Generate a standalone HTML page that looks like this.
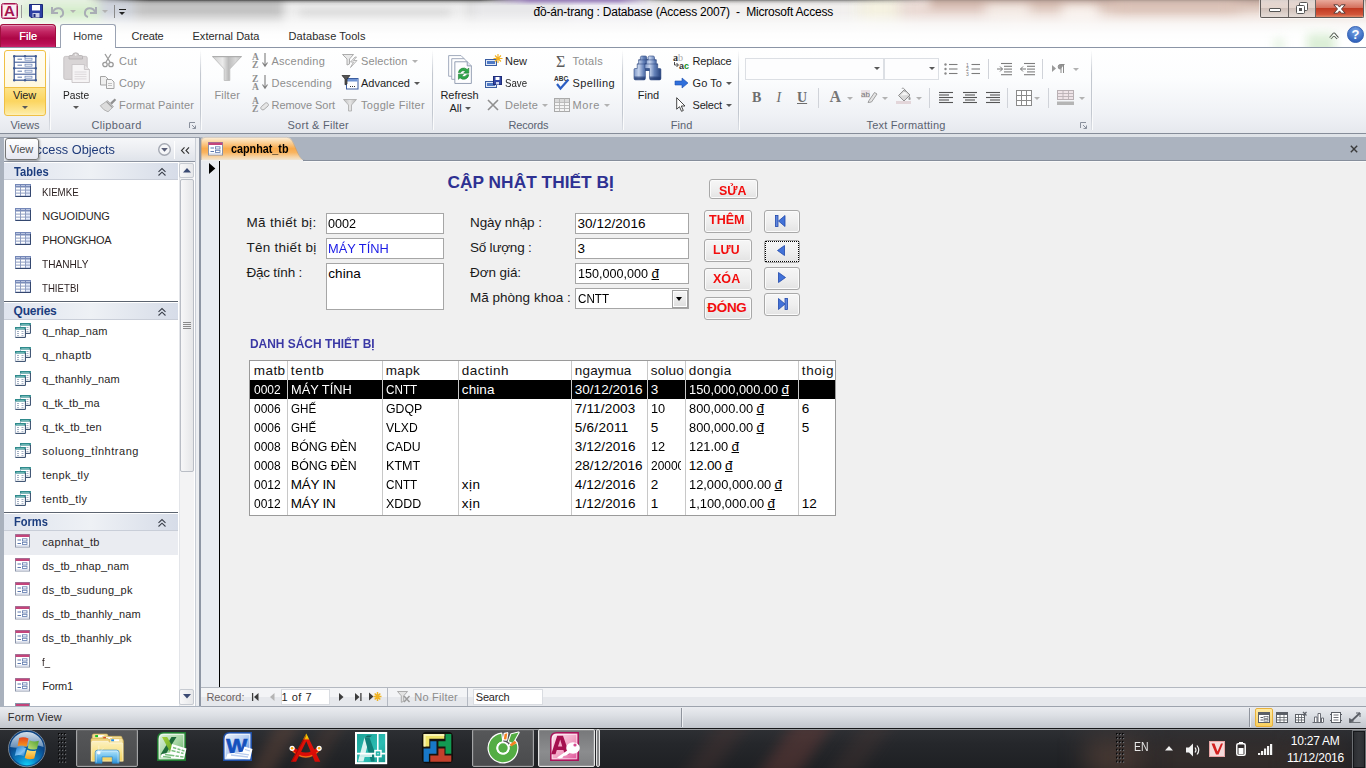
<!DOCTYPE html>
<html><head><meta charset="utf-8"><title>Microsoft Access</title>
<style>
*{box-sizing:border-box;margin:0;padding:0}
html,body{width:1366px;height:768px;overflow:hidden;background:#abb3bf}
body{font-family:"Liberation Sans",sans-serif;font-size:12px;color:#1e1e1e;position:relative}
.a{position:absolute}
.t{position:absolute;white-space:nowrap;line-height:14px}
svg{position:absolute;overflow:visible}
.d{color:#8e8e8e}
#title{left:0;top:0;width:1366px;height:48px;overflow:hidden;background:#dcdcdc}
#title2{left:0;top:12px;width:1366px;height:36px;background:linear-gradient(to bottom,rgba(255,255,255,0),rgba(255,255,255,.75) 12px,rgba(255,255,255,.97) 22px,#fff 30px)}
#ribbon{left:0;top:47px;width:1366px;height:87px;background:linear-gradient(to bottom,#ffffff 0,#fcfdfe 30px,#eff1f5 68px,#e5e8ed 86px);border-top:1px solid #8b95a6;border-bottom:1px solid #868d99}
.vsep{position:absolute;top:50px;width:2px;height:80px;background:linear-gradient(to bottom,rgba(190,195,203,0),#c3c8d0 30%,#c3c8d0 80%,rgba(190,195,203,.3));border-right:1px solid rgba(255,255,255,.9)}
.sep2{position:absolute;width:1px;height:20px;background:#d0d3d9}
.arr{position:absolute;width:0;height:0;border-left:3px solid transparent;border-right:3px solid transparent;border-top:3px solid #585858}
.arr.d{border-top-color:#b2b2b2}
.navhdr{position:absolute;left:4px;width:174px;height:17px;background:linear-gradient(to right,#dfe4ee 0,#eef1f5 50%,#d6dce8 100%);border-bottom:1px solid #c9ced8}
.ni{position:absolute;left:42.5px;font-size:11px;line-height:14px;white-space:nowrap;color:#2a1d1d}
.inp{position:absolute;background:#fff;border:1px solid #a6a6a6}
.btn{position:absolute;border-radius:3px;border:1px solid #a8a8a8;background:linear-gradient(to bottom,#f6f6f6 0,#efefef 50%,#e3e3e3 100%);box-shadow:inset 0 0 0 1px #fbfbfb}
.cl{position:absolute;top:361px;width:1px;height:154px;background:#c8c8c8}
</style></head><body>
<!-- part_chrome -->
<div class="a" id="title"><div class="a" style="left:-20px;top:-10px;width:125px;height:60px;background:#f3f5f1;filter:blur(7px)"></div><div class="a" style="left:20px;top:4px;width:92px;height:36px;background:#cdeac2;filter:blur(9px)"></div><div class="a" style="left:100px;top:-10px;width:38px;height:36px;background:#d0d4dd;filter:blur(5px)"></div><div class="a" style="left:135px;top:-10px;width:150px;height:34px;background:#c3c3c3;filter:blur(6px)"></div><div class="a" style="left:285px;top:-10px;width:183px;height:36px;background:#ededed;filter:blur(5px)"></div><div class="a" style="left:300px;top:10px;width:150px;height:8px;background:#d6d6d6;filter:blur(4px)"></div><div class="a" style="left:472px;top:-10px;width:94px;height:34px;background:#e8e8ea;filter:blur(6px)"></div><div class="a" style="left:566px;top:-10px;width:94px;height:34px;background:#f0eef4;filter:blur(7px)"></div><div class="a" style="left:655px;top:-10px;width:215px;height:36px;background:#f2f0ef;filter:blur(8px)"></div><div class="a" style="left:858px;top:-10px;width:50px;height:36px;background:#f5f2e1;filter:blur(8px)"></div><div class="a" style="left:900px;top:-10px;width:110px;height:36px;background:#ebdbd5;filter:blur(8px)"></div><div class="a" style="left:1005px;top:-10px;width:395px;height:40px;background:#eddfd8;filter:blur(8px)"></div><div class="a" style="left:930px;top:-8px;width:470px;height:16px;background:#cfb3a7;filter:blur(5px)"></div><div class="a" style="left:1110px;top:-6px;width:130px;height:20px;background:#dbc2b7;filter:blur(9px)"></div><div class="a" style="left:985px;top:5px;width:45px;height:15px;background:#f6efea;filter:blur(6px)"></div><div class="a" style="left:1062px;top:6px;width:36px;height:14px;background:#fbf6f2;filter:blur(6px)"></div><div class="a" style="left:1285px;top:28px;width:50px;height:18px;background:#e3f0dc;filter:blur(7px)"></div><div class="a" style="left:0;top:0;width:1366px;height:7px;background:linear-gradient(to bottom,rgba(40,40,40,.78) 0,rgba(70,70,70,.42) 1.500px,rgba(110,110,110,.14) 3.500px,rgba(150,150,150,0) 6px);-webkit-mask-image:linear-gradient(to right,transparent 85px,#000 150px,#000 480px,rgba(0,0,0,.25) 520px,rgba(0,0,0,.25) 640px,rgba(0,0,0,.8) 680px,rgba(0,0,0,.7) 850px,rgba(0,0,0,.3) 930px,rgba(0,0,0,.3) 1366px);mask-image:linear-gradient(to right,transparent 85px,#000 150px,#000 480px,rgba(0,0,0,.25) 520px,rgba(0,0,0,.25) 640px,rgba(0,0,0,.8) 680px,rgba(0,0,0,.7) 850px,rgba(0,0,0,.3) 930px,rgba(0,0,0,.3) 1366px)"></div><div class="a" style="left:490px;top:-2px;width:160px;height:7px;background:linear-gradient(to bottom,rgba(125,90,170,.95),rgba(140,105,185,.6) 50%,rgba(150,120,190,0));filter:blur(1.500px);-webkit-mask-image:linear-gradient(to right,transparent,#000 25%,#000 80%,transparent);mask-image:linear-gradient(to right,transparent,#000 25%,#000 80%,transparent)"></div></div><div class="a" id="title2"></div><svg style="left:1px;top:3px" width="17" height="16" viewBox="0 0 17 16"><rect x=".5" y=".5" width="16" height="15" rx="2" fill="#fbeef3" stroke="#a3154f"/><rect x="1.5" y="1.5" width="14" height="13" rx="1" fill="none" stroke="#d77a9f" stroke-width="1"/><text x="8.5" y="13.3" font-family="Liberation Sans,sans-serif" font-weight="bold" font-size="15" text-anchor="middle" fill="#a3154f">A</text></svg><div class="a" style="left:21px;top:5px;width:1px;height:13px;background:#9a9a9a"></div><svg style="left:29px;top:4px" width="14" height="14" viewBox="0 0 14 14"><path d="M.5 .5h13v13h-11.5l-1.5-1.5z" fill="#2b3fa3" stroke="#1c2a78"/><rect x="3" y="1" width="8" height="5.5" fill="#fff"/><rect x="3.5" y="9" width="7" height="4.5" fill="#c9cfe8"/><rect x="4.5" y="10" width="2" height="3" fill="#1c2a78"/></svg><svg style="left:51px;top:5px" width="14" height="12" viewBox="0 0 14 12"><path d="M1 2v6h6" fill="none" stroke="#a9adb5" stroke-width="2"/><path d="M2 7c2-5 9-5 10 0c.5 3-1 4.5-3 5" fill="none" stroke="#a9adb5" stroke-width="2"/></svg><div class="arr d" style="left:69.5px;top:10px"></div><svg style="left:83px;top:5px" width="14" height="12" viewBox="0 0 14 12"><path d="M13 2v6h-6" fill="none" stroke="#a9adb5" stroke-width="2"/><path d="M12 7c-2-5-9-5-10 0c-.5 3 1 4.5 3 5" fill="none" stroke="#a9adb5" stroke-width="2"/></svg><div class="arr d" style="left:101.5px;top:10px"></div><div class="a" style="left:114px;top:5px;width:1px;height:13px;background:#8a8a8a"></div><div class="a" style="left:119px;top:8.5px;width:7px;height:1.5px;background:#222"></div><div class="arr" style="left:119px;top:11.5px;border-left-width:3.5px;border-right-width:3.5px;border-top:3.5px solid #222"></div><div class="t" style="letter-spacing:-0.198px;left:533.50px;top:5.20px;font-size:12px;line-height:14px;color:#000;white-space:pre;">đồ-án-trang : Database (Access 2007)  -  Microsoft Access</div><div class="a" style="left:1260px;top:0;width:104px;height:18px;border:1px solid #5f5a58;border-top:none;border-radius:0 0 2px 2px;background:linear-gradient(to bottom,rgba(255,255,255,.55) 0,rgba(235,225,220,.5) 45%,rgba(190,180,175,.45) 50%,rgba(215,205,200,.5) 100%);box-shadow:0 0 0 1px rgba(255,255,255,.5)"></div><div class="a" style="left:1316px;top:0;width:47px;height:17px;border-radius:0 0 1px 0;background:linear-gradient(to bottom,#e9a99b 0,#d4705d 45%,#c13a22 50%,#d2553a 85%,#e08a6a 100%)"></div><div class="a" style="left:1288px;top:0;width:1px;height:17px;background:#6b6563"></div><div class="a" style="left:1315px;top:0;width:1px;height:17px;background:#6b6563"></div><div class="a" style="left:1269px;top:8px;width:12px;height:4px;background:#fff;border:1px solid #555;border-radius:1px"></div><svg style="left:1296px;top:2px" width="12" height="12" viewBox="0 0 12 12"><rect x="3.5" y=".5" width="8" height="8" rx="1" fill="#fff" stroke="#555"/><rect x=".5" y="3.5" width="8" height="8" rx="1" fill="#fff" stroke="#555"/><rect x="3" y="6" width="3" height="3" fill="#555"/></svg><svg style="left:1332.5px;top:3.5px" width="13" height="10" viewBox="0 0 13 10"><path d="M.8 .8h3.900l1.800 2.300l1.800-2.300h3.900l-3.700 4.200l3.700 4.200h-3.900l-1.800-2.300l-1.800 2.300h-3.900l3.700-4.200z" fill="#fff" stroke="#5a3a36" stroke-width="1"/></svg><svg style="left:1347px;top:26.3px" width="17" height="17" viewBox="0 0 17 17"><defs><radialGradient id="hg" cx=".5" cy=".3" r=".7"><stop offset="0" stop-color="#7aa6e6"/><stop offset="1" stop-color="#2a5cb8"/></radialGradient></defs><circle cx="8.5" cy="8.5" r="8" fill="url(#hg)" stroke="#3b66b5"/><text x="8.5" y="13" font-family="Liberation Sans,sans-serif" font-weight="bold" font-size="13" text-anchor="middle" fill="#fff">?</text></svg><svg style="left:1328.8px;top:31.8px" width="10" height="8" viewBox="0 0 10 8"><path d="M1.300 6.300l3.700-4.300l3.700 4.300" fill="none" stroke="#2a2a2a" stroke-width="3" stroke-linejoin="round"/><path d="M1.300 6.300l3.700-4.300l3.700 4.300" fill="none" stroke="#fff" stroke-width="1.300" stroke-linejoin="round"/></svg><div class="a" style="left:1255px;top:26px;width:100px;height:21px;overflow:hidden"><div class="a" style="left:52px;top:8px;width:28px;height:22px;background:rgba(196,228,188,.6);filter:blur(5px)"></div><div class="a" style="left:18px;top:12px;width:12px;height:14px;background:rgba(206,232,198,.4);filter:blur(4px)"></div></div><div class="a" id="ribbon"></div><div class="a" style="left:0;top:24px;width:56px;height:23px;border-radius:3px 4px 0 0;border:1px solid #a0103f;border-bottom:none;background:linear-gradient(to bottom,#d75b8e 0,#c22562 30%,#ad0646 60%,#b90f54 85%,#c9236a 100%);box-shadow:inset 0 1px 0 rgba(255,255,255,.35)"></div><div class="t" style="letter-spacing:-0.007px;left:19.30px;top:29.00px;font-size:11px;line-height:14px;color:#fff;text-shadow:0 0 .6px #fff;">File</div><div class="a" style="left:60px;top:24px;width:56px;height:24px;border-radius:3px 3px 0 0;border:1px solid #9aa3b3;border-bottom:none;background:#fff"></div><div class="t" style="letter-spacing:-0.011px;left:73.20px;top:29.00px;font-size:11px;line-height:14px;color:#3b3b3b;">Home</div><div class="t" style="letter-spacing:-0.170px;left:131.50px;top:29.00px;font-size:11px;line-height:14px;color:#2b2b2b;">Create</div><div class="t" style="letter-spacing:0.027px;left:192.50px;top:29.00px;font-size:11px;line-height:14px;color:#2b2b2b;">External Data</div><div class="t" style="letter-spacing:0.098px;left:288.50px;top:29.00px;font-size:11px;line-height:14px;color:#2b2b2b;">Database Tools</div>
<!-- part_ribbon -->
<div class="a" style="left:4px;top:50px;width:42px;height:66px;border:1px solid #f0c045;border-radius:3px;background:linear-gradient(to bottom,#fffdf6 0,#fff8df 36px,#fde38a 37px,#fbd560 50px,#fdeaa0 62px,#fff6d5 66px)"></div><div class="a" style="left:5px;top:87px;width:40px;height:1px;background:#f0c045"></div><svg style="left:12.6px;top:55px" width="24" height="26.4" viewBox="0 0 24 26.4"><rect x="1.2" y="1.2" width="21.6" height="24" fill="#fff" stroke="#3e5a94" stroke-width="1.3"/><path d="M1 7.2 h22" stroke="#3e5a94" stroke-width="1.1"/><path d="M1 13.2 h22" stroke="#3e5a94" stroke-width="1.1"/><path d="M1 19.2 h22" stroke="#3e5a94" stroke-width="1.1"/><path d="M4.5 4.2 h4.5" stroke="#5f79ad" stroke-width="1"/><rect x="12" y="3.2" width="7" height="2" fill="#f4f6fb" stroke="#6a83b5" stroke-width=".7"/><path d="M4.5 10.2 h4.5" stroke="#5f79ad" stroke-width="1"/><rect x="12" y="9.2" width="7" height="2" fill="#f4f6fb" stroke="#6a83b5" stroke-width=".7"/><path d="M4.5 16.2 h4.5" stroke="#5f79ad" stroke-width="1"/><rect x="12" y="15.2" width="7" height="2" fill="#f4f6fb" stroke="#6a83b5" stroke-width=".7"/><path d="M4.5 22.2 h4.5" stroke="#5f79ad" stroke-width="1"/><rect x="12" y="21.2" width="7" height="2" fill="#f4f6fb" stroke="#6a83b5" stroke-width=".7"/><circle cx="1.2" cy="1.2" r="1.2" fill="#3e5a94"/><circle cx="22.8" cy="1.2" r="1.2" fill="#3e5a94"/><circle cx="1.2" cy="25.2" r="1.2" fill="#3e5a94"/><circle cx="22.8" cy="25.2" r="1.2" fill="#3e5a94"/><circle cx="12" cy="1.2" r="1.2" fill="#3e5a94"/><circle cx="12" cy="25.2" r="1.2" fill="#3e5a94"/><circle cx="1.2" cy="13.2" r="1.2" fill="#3e5a94"/><circle cx="22.8" cy="13.2" r="1.2" fill="#3e5a94"/></svg><div class="t" style="letter-spacing:-0.086px;left:12.90px;top:88.00px;font-size:11px;line-height:14px;color:#1e1e1e;">View</div><div class="arr" style="left:21.5px;top:105.5px"></div><div class="t" style="letter-spacing:-0.029px;left:10.50px;top:118.00px;font-size:11px;line-height:14px;color:#5a6270;">Views</div><div class="vsep" style="left:49px"></div><svg style="left:62.5px;top:52px" width="27" height="32" viewBox="0 0 27 32"><rect x=".8" y="4.400" width="23.400" height="23" rx="1.500" fill="#d9d5d6" stroke="#c4c0c1" stroke-width=".9"/><path d="M6 7V4.500q0-1 1-1h2.500q0-2.700 3.200-2.700t3.200 2.700H18.500q1 0 1 1V7z" fill="#cfcbcc" stroke="#b3afb0" stroke-width=".8"/><circle cx="12.700" cy="2.800" r="1" fill="#f0eeee"/><path d="M9 12.500h12.400l5 5v13h-17.400z" fill="#f6f4f5" stroke="#c8c4c6" stroke-width=".9"/><path d="M21.400 12.500v5h5" fill="#e6e3e4" stroke="#c8c4c6" stroke-width=".9"/><path d="M11.500 20h12" stroke="#d6d2d4" stroke-width=".8"/><path d="M11.500 22.3h12" stroke="#d6d2d4" stroke-width=".8"/><path d="M11.500 24.6h12" stroke="#d6d2d4" stroke-width=".8"/><path d="M11.500 26.9h12" stroke="#d6d2d4" stroke-width=".8"/></svg><div class="t" style="transform:scaleX(0.9278);transform-origin:0 50%;left:62.50px;top:88.00px;font-size:11px;line-height:14px;color:#1e1e1e;">Paste</div><div class="arr" style="left:72.5px;top:105.5px"></div><svg style="left:102px;top:54px" width="12" height="14" viewBox="0 0 12 14"><path d="M3 0l5 8M9 0L4 8" stroke="#9b9b9b" stroke-width="1.3" fill="none"/><circle cx="3" cy="10.5" r="2.2" fill="none" stroke="#9b9b9b" stroke-width="1.3"/><circle cx="9" cy="10.5" r="2.2" fill="none" stroke="#9b9b9b" stroke-width="1.3"/></svg><div class="t" style="letter-spacing:0.294px;left:119.00px;top:54.00px;font-size:11px;line-height:14px;color:#8e8e8e;">Cut</div><svg style="left:100px;top:76px" width="15" height="13" viewBox="0 0 15 13"><path d="M.5 .5h5l2.5 2.5v6h-7.5z" fill="#efefef" stroke="#a4a4a4"/><path d="M6.5 3.5h5l2.5 2.5v6.5h-7.5z" fill="#f6f6f6" stroke="#a4a4a4"/><path d="M8 7.5h4M8 9.5h4" stroke="#b5b5b5" stroke-width=".8"/></svg><div class="t" style="letter-spacing:0.080px;left:119.00px;top:76.00px;font-size:11px;line-height:14px;color:#8e8e8e;">Copy</div><svg style="left:100px;top:98px" width="16" height="14" viewBox="0 0 16 14"><path d="M10.200 4.800l4.500-4.300l1.500 1.500l-4.300 4.500z" fill="#8f8f8f"/><path d="M.3 7.700L7.500 2.600l6 6L8 13.800Q3.500 12.500.3 7.700Z" fill="#dcdcdc" stroke="#adadad" stroke-width=".9"/><path d="M6.500 3.500l6 6" stroke="#9f9f9f" stroke-width="1.300"/></svg><div class="t" style="letter-spacing:0.161px;left:119.00px;top:98.00px;font-size:11px;line-height:14px;color:#8e8e8e;">Format Painter</div><div class="t" style="letter-spacing:0.346px;left:91.50px;top:118.00px;font-size:11px;line-height:14px;color:#5a6270;">Clipboard</div><svg style="left:189px;top:122px" width="7" height="7" viewBox="0 0 7 7"><path d="M.5 6V.5H6" fill="none" stroke="#8a909c"/><path d="M3 3l3.5 3.5M6.5 3.5v3h-3" fill="none" stroke="#8a909c"/></svg><div class="vsep" style="left:200px"></div><svg style="left:212px;top:56px" width="30" height="25" viewBox="0 0 30 25"><defs><linearGradient id="fg" x1="0" x2="1"><stop offset="0" stop-color="#cfcfcf"/><stop offset=".35" stop-color="#ebebeb"/><stop offset=".55" stop-color="#bcbcbc"/><stop offset=".8" stop-color="#d9d9d9"/><stop offset="1" stop-color="#c2c2c2"/></linearGradient></defs><path d="M.5 .5H29.500L17.800 13V24.500H12.200V13Z" fill="url(#fg)" stroke="#b9b9b9" stroke-width=".8"/><path d="M.5 .7H29.500" stroke="#a9a9a9" stroke-width="1"/></svg><div class="t" style="letter-spacing:0.209px;left:214.40px;top:88.00px;font-size:11px;line-height:14px;color:#8e8e8e;">Filter</div><svg style="left:252.2px;top:53.5px" width="16" height="16" viewBox="0 0 16 16"><text x="0" y="6" font-family="Liberation Serif,serif" font-size="9.500" font-weight="bold" fill="#8f8f8f">A</text><text x="0" y="14.200" font-family="Liberation Serif,serif" font-size="9.500" font-weight="bold" fill="#8f8f8f">Z</text></svg><svg style="left:261.7px;top:53px" width="6" height="14" viewBox="0 0 6 14"><path d="M3 0v13M.5 9.500l2.500 3.800l2.500-3.800" fill="none" stroke="#7d7d7d" stroke-width="1.100"/></svg><div class="t" style="letter-spacing:0.236px;left:271.50px;top:54.00px;font-size:11px;line-height:14px;color:#8e8e8e;">Ascending</div><svg style="left:252.2px;top:75.5px" width="16" height="16" viewBox="0 0 16 16"><text x="0" y="6" font-family="Liberation Serif,serif" font-size="9.500" font-weight="bold" fill="#8f8f8f">Z</text><text x="0" y="14.200" font-family="Liberation Serif,serif" font-size="9.500" font-weight="bold" fill="#8f8f8f">A</text></svg><svg style="left:261.7px;top:75px" width="6" height="14" viewBox="0 0 6 14"><path d="M3 0v13M.5 9.500l2.500 3.800l2.500-3.800" fill="none" stroke="#7d7d7d" stroke-width="1.100"/></svg><div class="t" style="letter-spacing:0.240px;left:271.50px;top:76.00px;font-size:11px;line-height:14px;color:#8e8e8e;">Descending</div><svg style="left:252.2px;top:97.5px" width="16" height="16" viewBox="0 0 16 16"><text x="0" y="6" font-family="Liberation Serif,serif" font-size="9.500" font-weight="bold" fill="#8f8f8f">A</text><text x="0" y="14.200" font-family="Liberation Serif,serif" font-size="9.500" font-weight="bold" fill="#8f8f8f">Z</text></svg><svg style="left:258px;top:102px" width="11" height="10" viewBox="0 0 11 10"><path d="M3.5 4.5l4-3.5c1.500-1 4 1.500 2.500 3l-4 3.500c-2 1.500-4.500-1.500-2.500-3z" fill="#e6e6e6" stroke="#a2a2a2" stroke-width=".9"/></svg><div class="t" style="letter-spacing:-0.063px;left:271.50px;top:98.00px;font-size:11px;line-height:14px;color:#8e8e8e;">Remove Sort</div><svg style="left:342px;top:54px" width="16" height="15" viewBox="0 0 16 15"><path d="M.5 .5h11l-4 4.500v5l-2.500 1v-6z" fill="#e9e9e9" stroke="#a5a5a5" stroke-width=".9"/><path d="M13 3l-4.500 5h3l-3 5.500l6.500-7h-3.500l3-3.500z" fill="#f2f2f2" stroke="#a5a5a5" stroke-width=".8"/></svg><div class="t" style="letter-spacing:0.138px;left:361.00px;top:54.00px;font-size:11px;line-height:14px;color:#8e8e8e;">Selection</div><div class="arr d" style="left:412px;top:60px"></div><svg style="left:342px;top:75px" width="17" height="15" viewBox="0 0 17 15"><rect x="4.500" y="3.500" width="11.500" height="10.500" fill="#fff" stroke="#3a5da0"/><rect x="5" y="4" width="10.500" height="2.500" fill="#6f93d3"/><path d="M8 11.500h1M10 11.500h1M12 11.500h1" stroke="#333" stroke-width="1"/><path d="M0 .5h8l-3 3.500v5l-2 .8v-5.800z" fill="#555" stroke="#222" stroke-width=".7"/></svg><div class="t" style="letter-spacing:0.009px;left:361.00px;top:76.00px;font-size:11px;line-height:14px;color:#1e1e1e;">Advanced</div><div class="arr" style="left:414px;top:82px"></div><svg style="left:343px;top:99px" width="14" height="13" viewBox="0 0 14 13"><defs><linearGradient id="fg2" x1="0" x2="1"><stop offset="0" stop-color="#bdbdbd"/><stop offset=".5" stop-color="#e6e6e6"/><stop offset="1" stop-color="#b5b5b5"/></linearGradient></defs><path d="M.5 .5h13l-5 5.500v6h-3v-6z" fill="url(#fg2)" stroke="#a9a9a9" stroke-width=".8"/></svg><div class="t" style="letter-spacing:0.314px;left:361.00px;top:98.00px;font-size:11px;line-height:14px;color:#8e8e8e;">Toggle Filter</div><div class="t" style="letter-spacing:0.264px;left:287.50px;top:118.00px;font-size:11px;line-height:14px;color:#5a6270;">Sort &amp; Filter</div><div class="vsep" style="left:432px"></div>
<!-- part_ribbon2 -->
<svg style="left:446.5px;top:53px" width="26" height="32" viewBox="0 0 25 31"><path d="M1.5 2.5h12l3 3v17h-15z" fill="#fff" stroke="#9aa4b8" stroke-width=".9"/><path d="M4.500 5.500h12l3 3v17h-15z" fill="#fff" stroke="#9aa4b8" stroke-width=".9"/><path d="M7.500 8.500h12l4 4v17h-16z" fill="#fdfdfe" stroke="#8e99af" stroke-width=".9"/><path d="M19.500 8.500v4h4" fill="#dfe4ee" stroke="#8e99af" stroke-width=".9"/><path d="M11 19a5 5 0 0 1 8.500-3l1.500-1.500v5h-5l1.700-1.700a3 3 0 0 0-4.700 1.200z" fill="#2fa84a" stroke="#1d7e33" stroke-width=".6"/><path d="M21 21a5 5 0 0 1-8.500 3l-1.500 1.500v-5h5l-1.700 1.700a3 3 0 0 0 4.700-1.200z" fill="#2fa84a" stroke="#1d7e33" stroke-width=".6"/></svg><div class="t" style="letter-spacing:-0.074px;left:440.50px;top:88.00px;font-size:11px;line-height:14px;color:#1e1e1e;">Refresh</div><div class="t" style="letter-spacing:-0.009px;left:449.40px;top:100.50px;font-size:11px;line-height:14px;color:#1e1e1e;">All</div><div class="arr" style="left:464.5px;top:106.5px"></div><svg style="left:485px;top:54px" width="17" height="13" viewBox="0 0 17 13"><rect x=".5" y="5.500" width="11" height="6" fill="#dfe8f7" stroke="#3a5da0"/><rect x="2" y="7" width="8" height="3" fill="#4f79c4"/><path d="M13 0v9M8.500 4.500h9M10 1.500l6 6M16 1.500l-6 6" stroke="#f2b021" stroke-width="1.100"/></svg><div class="t" style="letter-spacing:-0.002px;left:505.00px;top:54.00px;font-size:11px;line-height:14px;color:#1e1e1e;">New</div><svg style="left:485px;top:76px" width="17" height="13" viewBox="0 0 17 13"><rect x=".5" y="5.500" width="11" height="6" fill="#dfe8f7" stroke="#3a5da0"/><rect x="2" y="7" width="8" height="3" fill="#4f79c4"/><rect x="8.500" y=".5" width="8" height="8" fill="#3347a5" stroke="#1f2d78"/><rect x="10.500" y="1" width="4" height="3" fill="#fff"/><rect x="11" y="6" width="3" height="2.500" fill="#cfd5ee"/></svg><div class="t" style="transform:scaleX(0.8774);transform-origin:0 50%;left:505.00px;top:76.00px;font-size:11px;line-height:14px;color:#1e1e1e;">Save</div><svg style="left:487px;top:99px" width="12" height="12" viewBox="0 0 12 12"><path d="M1 1l10 10M11 1L1 11" stroke="#8f8f8f" stroke-width="1.600"/></svg><div class="t" style="letter-spacing:0.200px;left:505.00px;top:98.00px;font-size:11px;line-height:14px;color:#8e8e8e;">Delete</div><div class="arr d" style="left:541.5px;top:104px"></div><div class="t" style="left:556.00px;top:52.50px;font-size:16px;line-height:18px;color:#5a5a5a;font-family:Liberation Serif,serif;">Σ</div><div class="t" style="letter-spacing:0.294px;left:572.50px;top:54.00px;font-size:11px;line-height:14px;color:#8e8e8e;">Totals</div><svg style="left:554px;top:74px" width="17" height="17" viewBox="0 0 17 17"><text x="0" y="6.500" font-family="Liberation Sans,sans-serif" font-size="6.500" font-weight="bold" fill="#333">ABC</text><path d="M3 10l3.500 4.500l8-9" fill="none" stroke="#2d5fc4" stroke-width="2.200"/></svg><div class="t" style="letter-spacing:0.420px;left:572.50px;top:76.00px;font-size:11px;line-height:14px;color:#1e1e1e;">Spelling</div><svg style="left:554px;top:98px" width="16" height="14" viewBox="0 0 16 14"><rect x=".5" y=".5" width="15" height="13" fill="#f4f4f4" stroke="#a9a9a9"/><rect x="1" y="1" width="14" height="3" fill="#d9d9d9"/><path d="M.5 4.5h15" stroke="#b5b5b5" stroke-width=".9"/><path d="M.5 7.5h15" stroke="#b5b5b5" stroke-width=".9"/><path d="M.5 10.5h15" stroke="#b5b5b5" stroke-width=".9"/><path d="M5.5 .5v13" stroke="#b5b5b5" stroke-width=".9"/><path d="M10.5 .5v13" stroke="#b5b5b5" stroke-width=".9"/></svg><div class="t" style="letter-spacing:0.609px;left:572.50px;top:98.00px;font-size:11px;line-height:14px;color:#8e8e8e;">More</div><div class="arr d" style="left:604px;top:104px"></div><div class="t" style="letter-spacing:-0.166px;left:508.50px;top:118.00px;font-size:11px;line-height:14px;color:#5a6270;">Records</div><div class="vsep" style="left:621.5px"></div><svg style="left:634.2px;top:56px" width="27" height="24" viewBox="0 0 27 24"><defs><linearGradient id="bg1" x1="0" x2="1"><stop offset="0" stop-color="#7f99c9"/><stop offset=".3" stop-color="#c4d2ec"/><stop offset=".6" stop-color="#6481b8"/><stop offset="1" stop-color="#27427c"/></linearGradient><linearGradient id="bg2" x1="1" x2="0"><stop offset="0" stop-color="#7f99c9"/><stop offset=".3" stop-color="#c4d2ec"/><stop offset=".6" stop-color="#6481b8"/><stop offset="1" stop-color="#27427c"/></linearGradient></defs><rect x="10" y="8.500" width="7" height="6.500" fill="#3b588f"/><g><path d="M6.400 1.500q0-1.500 1.500-1.500h3.400q1.500 0 1.500 1.500V3.800h1.800V7.900h1.400V12.500H11.400V22.400q0 1.500-1.500 1.500H1.500q-1.500 0-1.500-1.500V13.500q0-1 1-1H3.200V7.900H4.600V3.800H6.400Z" fill="url(#bg1)" stroke="#2b4680" stroke-width=".6"/><path d="M4.600 3.900H14.600M3.200 8H16M0 20.800H11.400" stroke="#2b4680" stroke-width=".7" opacity=".75"/><path d="M.3 21.200h10.800v1.500q0 1-1 1H1.300q-1 0-1-1z" fill="#1f3870" opacity=".8"/></g><g transform="translate(26.900 0) scale(-1 1)"><path d="M6.400 1.500q0-1.500 1.500-1.500h3.400q1.500 0 1.500 1.500V3.800h1.800V7.900h1.400V12.500H11.400V22.400q0 1.500-1.500 1.500H1.500q-1.500 0-1.500-1.500V13.500q0-1 1-1H3.200V7.900H4.600V3.800H6.400Z" fill="url(#bg2)" stroke="#2b4680" stroke-width=".6"/><path d="M4.600 3.900H14.600M3.200 8H16M0 20.800H11.400" stroke="#2b4680" stroke-width=".7" opacity=".75"/><path d="M.3 21.200h10.800v1.500q0 1-1 1H1.300q-1 0-1-1z" fill="#1f3870" opacity=".8"/></g></svg><div class="t" style="letter-spacing:-0.025px;left:637.80px;top:88.00px;font-size:11px;line-height:14px;color:#1e1e1e;">Find</div><svg style="left:673px;top:53px" width="17" height="16" viewBox="0 0 17 16"><text x="0" y="7.500" font-family="Liberation Serif,serif" font-size="10" font-weight="bold" fill="#333">a</text><text x="5" y="7.500" font-family="Liberation Serif,serif" font-size="10" fill="#aaa">b</text><text x="6" y="15.500" font-family="Liberation Sans,sans-serif" font-size="9" font-weight="bold" fill="#333">a</text><text x="11" y="15.500" font-family="Liberation Sans,sans-serif" font-size="9" font-weight="bold" fill="#14901f">c</text><path d="M1.500 9v3h3.500M3.500 10l2 2l-2 2" fill="none" stroke="#333" stroke-width=".9"/></svg><div class="t" style="letter-spacing:-0.194px;left:692.50px;top:54.00px;font-size:11px;line-height:14px;color:#1e1e1e;">Replace</div><svg style="left:675px;top:78px" width="13" height="10" viewBox="0 0 13 10"><path d="M0 3h7v-3l6 5l-6 5v-3h-7z" fill="#2f6fdb" stroke="#1c4fae" stroke-width=".6"/></svg><div class="t" style="letter-spacing:0.070px;left:692.50px;top:76.00px;font-size:11px;line-height:14px;color:#1e1e1e;">Go To</div><div class="arr" style="left:725.5px;top:82px"></div><svg style="left:676px;top:97px" width="10" height="15" viewBox="0 0 10 15"><path d="M.7.700v11.500l2.800-2.500l2 4.600l1.800-.8l-2-4.500h3.700z" fill="#fff" stroke="#333" stroke-width=".9"/></svg><div class="t" style="letter-spacing:-0.179px;left:692.50px;top:98.00px;font-size:11px;line-height:14px;color:#1e1e1e;">Select</div><div class="arr" style="left:725.5px;top:104px"></div><div class="t" style="letter-spacing:0.050px;left:670.80px;top:118.00px;font-size:11px;line-height:14px;color:#5a6270;">Find</div><div class="vsep" style="left:738px"></div><div class="a" style="left:745px;top:58px;width:139px;height:22px;border:1px solid #dcdfe4;background:#fdfdfe"></div><div class="a" style="left:884px;top:58px;width:55px;height:22px;border:1px solid #dcdfe4;background:#fdfdfe"></div><div class="arr" style="left:873.5px;top:66.7px"></div><div class="arr" style="left:928.5px;top:66.7px"></div><svg style="left:944px;top:62.5px" width="14" height="12" viewBox="0 0 14 12"><circle cx="1.500" cy="1.5" r="1.200" fill="#8a8a8a"/><path d="M5 1.5h8.500" stroke="#7d7d7d" stroke-width="1.100"/><circle cx="1.500" cy="6" r="1.200" fill="#8a8a8a"/><path d="M5 6h8.500" stroke="#7d7d7d" stroke-width="1.100"/><circle cx="1.500" cy="10.5" r="1.200" fill="#8a8a8a"/><path d="M5 10.5h8.500" stroke="#7d7d7d" stroke-width="1.100"/></svg><svg style="left:965.5px;top:62.5px" width="14" height="12" viewBox="0 0 14 12"><text x="0" y="3.5" font-family="Liberation Sans,sans-serif" font-size="5" fill="#777">1</text><path d="M5.500 1.5h8.500" stroke="#7d7d7d" stroke-width="1.100"/><text x="0" y="8" font-family="Liberation Sans,sans-serif" font-size="5" fill="#777">2</text><path d="M5.500 6h8.500" stroke="#7d7d7d" stroke-width="1.100"/><text x="0" y="12.5" font-family="Liberation Sans,sans-serif" font-size="5" fill="#777">3</text><path d="M5.500 10.5h8.500" stroke="#7d7d7d" stroke-width="1.100"/></svg><div class="sep2" style="left:988px;top:59px"></div><svg style="left:997px;top:62.5px" width="16" height="12" viewBox="0 0 16 12"><path d="M4 0.5h11" stroke="#7d7d7d" stroke-width="1.100"/><path d="M7 3.3h8" stroke="#7d7d7d" stroke-width="1.100"/><path d="M7 6.1h8" stroke="#7d7d7d" stroke-width="1.100"/><path d="M7 8.9h8" stroke="#7d7d7d" stroke-width="1.100"/><path d="M4 11.7h11" stroke="#7d7d7d" stroke-width="1.100"/><path d="M0 6h5.500M3 3.500l2.500 2.500l-2.500 2.500" fill="none" stroke="#777" stroke-width="1"/></svg><svg style="left:1019.5px;top:62.5px" width="16" height="12" viewBox="0 0 16 12"><path d="M4 0.5h11" stroke="#7d7d7d" stroke-width="1.100"/><path d="M7 3.3h8" stroke="#7d7d7d" stroke-width="1.100"/><path d="M7 6.1h8" stroke="#7d7d7d" stroke-width="1.100"/><path d="M7 8.9h8" stroke="#7d7d7d" stroke-width="1.100"/><path d="M4 11.7h11" stroke="#7d7d7d" stroke-width="1.100"/><path d="M6 6h-5.500M3 3.500l-2.500 2.500l2.500 2.500" fill="none" stroke="#777" stroke-width="1"/></svg><div class="sep2" style="left:1042px;top:59px"></div><svg style="left:1052px;top:64px" width="14" height="10" viewBox="0 0 14 10"><path d="M0 1l4 3.500l-4 3.500z" fill="#9a9a9a"/><path d="M9 0v9M11.500 0v9M12.500 .5h-4a2.300 2.300 0 0 0 0 4.600" fill="#9a9a9a" stroke="#8a8a8a" stroke-width="1"/></svg><div class="arr d" style="left:1072.5px;top:67.5px"></div><div class="t" style="left:752.00px;top:90.50px;font-size:14px;line-height:14px;color:#6e6e6e;font-weight:bold;font-family:Liberation Serif,serif;">B</div><div class="t" style="left:776.50px;top:90.50px;font-size:14px;line-height:14px;color:#6e6e6e;font-family:Liberation Serif,serif;font-style:italic;">I</div><div class="t" style="left:797.00px;top:90.50px;font-size:14px;line-height:14px;color:#6e6e6e;font-family:Liberation Serif,serif;text-decoration:underline;font-weight:bold;">U</div><div class="sep2" style="left:818px;top:88px"></div><div class="t" style="left:829.50px;top:90.00px;font-size:16px;line-height:14px;color:#777;font-weight:bold;font-family:Liberation Serif,serif;">A</div><div class="arr d" style="left:847px;top:96.5px"></div><svg style="left:860.5px;top:89px" width="17" height="14" viewBox="0 0 17 14"><rect x="0" y="1" width="9" height="8" fill="#e9e1e5"/><text x="0" y="7.500" font-family="Liberation Sans,sans-serif" font-size="8" fill="#777">ab</text><path d="M8 11.500l5.500-8l2.500 1.500l-5.500 8l-3.500.5z" fill="#e4e4e4" stroke="#8a8a8a" stroke-width=".8"/></svg><div class="arr d" style="left:882px;top:96.5px"></div><svg style="left:895.5px;top:88px" width="16" height="16" viewBox="0 0 16 16"><path d="M2.500 7.500l6-6l5.500 5.500l-6 6z" fill="#d9d9d9" stroke="#858585" stroke-width=".9"/><path d="M4.500 7.500l4-4l3.500 3.500z" fill="#f6f6f6"/><path d="M6.500 1c-1.500-1.500 3-1.500 2.500 3" fill="none" stroke="#888" stroke-width=".8"/><path d="M13.500 8c1.500 2 1.500 4 0 4s-1.500-2 0-4z" fill="#999"/><rect x="0" y="13" width="15" height="3" fill="#e3d6da"/></svg><div class="arr d" style="left:915.5px;top:96.5px"></div><div class="sep2" style="left:929px;top:88px"></div><svg style="left:939px;top:92px" width="14" height="12" viewBox="0 0 14 12"><path d="M0 0.5h14" stroke="#555" stroke-width="1.100"/><path d="M0 3h10" stroke="#555" stroke-width="1.100"/><path d="M0 5.5h14" stroke="#555" stroke-width="1.100"/><path d="M0 8h10" stroke="#555" stroke-width="1.100"/><path d="M0 10.5h14" stroke="#555" stroke-width="1.100"/></svg><svg style="left:962.5px;top:92px" width="14" height="12" viewBox="0 0 14 12"><path d="M0 0.5h14" stroke="#555" stroke-width="1.100"/><path d="M2 3h10" stroke="#555" stroke-width="1.100"/><path d="M0 5.5h14" stroke="#555" stroke-width="1.100"/><path d="M2 8h10" stroke="#555" stroke-width="1.100"/><path d="M0 10.5h14" stroke="#555" stroke-width="1.100"/></svg><svg style="left:985.5px;top:92px" width="14" height="12" viewBox="0 0 14 12"><path d="M0 0.5h14" stroke="#555" stroke-width="1.100"/><path d="M4 3h10" stroke="#555" stroke-width="1.100"/><path d="M0 5.5h14" stroke="#555" stroke-width="1.100"/><path d="M4 8h10" stroke="#555" stroke-width="1.100"/><path d="M0 10.5h14" stroke="#555" stroke-width="1.100"/></svg><div class="sep2" style="left:1007px;top:88px"></div><svg style="left:1016px;top:89.5px" width="16" height="16" viewBox="0 0 16 16"><rect x=".5" y=".5" width="15" height="15" fill="#fff" stroke="#8a8a8a"/><path d="M5.500 .5v15M10.500 .5v15M.5 5.500h15M.5 10.500h15" stroke="#8a8a8a"/></svg><div class="arr d" style="left:1033.5px;top:96.5px"></div><div class="sep2" style="left:1048px;top:88px"></div><svg style="left:1056.5px;top:90px" width="17" height="15" viewBox="0 0 17 15"><rect x=".5" y=".5" width="16" height="9" fill="#efe4e8" stroke="#b9b0b4"/><path d="M6 .5v9M11.500 .5v9M.5 3.500h16M.5 6.500h16" stroke="#b9b0b4" stroke-width=".9"/><rect x="0" y="11.500" width="17" height="3.500" fill="#b5b5b5"/></svg><div class="arr d" style="left:1079px;top:96.5px"></div><div class="t" style="letter-spacing:0.219px;left:866.50px;top:118.00px;font-size:11px;line-height:14px;color:#5a6270;">Text Formatting</div><svg style="left:1080px;top:122px" width="7" height="7" viewBox="0 0 7 7"><path d="M.5 6V.5H6" fill="none" stroke="#8a909c"/><path d="M3 3l3.5 3.5M6.5 3.5v3h-3" fill="none" stroke="#8a909c"/></svg><div class="vsep" style="left:1091px"></div>
<!-- part_nav -->
<div class="a" style="left:0;top:134px;width:1366px;height:3.300px;background:linear-gradient(to right,#cfd3da,#dde1e6 60%,#dfe3e8)"></div><div class="a" style="left:0;top:137.300px;width:200px;height:.7px;background:#9aa1ad"></div><div class="a" style="left:0;top:138px;width:4px;height:568px;background:#a9b1bd"></div><div class="a" style="left:4px;top:138px;width:192px;height:568px;background:#fff"></div><div class="a" style="left:4px;top:138px;width:192px;height:24px;background:linear-gradient(to bottom,#f6f7f9 0,#eceef2 50%,#dfe3ea 100%);border-bottom:1px solid #8d94a0"></div><div class="t" style="transform:scaleX(0.9456);transform-origin:0 50%;left:10.00px;top:142.45px;font-size:13.5px;line-height:15.5px;color:#1f3b7a;">All Access Objects</div><svg style="left:158px;top:143px" width="13" height="13" viewBox="0 0 13 13"><circle cx="6.5" cy="6.5" r="5.800" fill="#f5f6f8" stroke="#a4a8b2" stroke-width="1.400"/><path d="M3.2 5h6.600l-3.300 3.800z" fill="#5a5f78"/></svg><div class="a" style="left:174px;top:141px;width:1px;height:18px;background:#fff"></div><svg style="left:180.5px;top:147px" width="9" height="7" viewBox="0 0 9 7"><path d="M3.500 .3l-3 3.200l3 3.200M8 .3l-3 3.200l3 3.200" fill="none" stroke="#333" stroke-width="1.100"/></svg><div class="a" style="left:5px;top:137.5px;width:33.5px;height:22px;border:1px solid #767676;border-radius:3px;background:linear-gradient(to bottom,#fff,#e6e7f1);box-shadow:1px 1px 2px rgba(0,0,0,.3)"></div><div class="t" style="letter-spacing:-0.011px;left:9.60px;top:142.20px;font-size:11px;line-height:14px;color:#4c4c4c;">View</div><div class="navhdr" style="top:163px"></div><div class="t" style="transform:scaleX(0.9320);transform-origin:0 50%;left:13.60px;top:164.70px;font-size:12px;line-height:14px;color:#1c3d7e;font-weight:bold;">Tables</div><svg style="left:157.5px;top:168px" width="8" height="8" viewBox="0 0 8 8"><path d="M.5 3.800l3.500-3.300l3.500 3.300M.5 7.500l3.500-3.300l3.500 3.300" fill="none" stroke="#3a3f4a" stroke-width="1.100"/></svg><svg style="left:15px;top:184px" width="16" height="13" viewBox="0 0 16 13"><rect x="0" y="0" width="16" height="13" fill="#8e9dc1"/><rect x="0" y="0" width="16" height="2.700" fill="#7487b7"/><path d="M15.500 2v10.500H.5" fill="none" stroke="#34476f" stroke-width="1"/><rect x="1" y="3.6" width="4" height="2" fill="#fff"/><rect x="6" y="3.6" width="4" height="2" fill="#fff"/><rect x="11" y="3.6" width="4" height="2" fill="#e3eafb"/><rect x="1" y="6.6" width="4" height="2" fill="#fff"/><rect x="6" y="6.6" width="4" height="2" fill="#fff"/><rect x="11" y="6.6" width="4" height="2" fill="#e3eafb"/><rect x="1" y="9.6" width="4" height="2" fill="#fff"/><rect x="6" y="9.6" width="4" height="2" fill="#fff"/><rect x="11" y="9.6" width="4" height="2" fill="#e3eafb"/><rect x="1" y="1" width="4" height="1" fill="#b9c4e0"/><rect x="6" y="1" width="4" height="1" fill="#b9c4e0"/><rect x="11" y="1" width="4" height="1" fill="#b9c4e0"/></svg><div class="t" style="transform:scaleX(0.8805);transform-origin:0 50%;left:42.30px;top:185.80px;font-size:11px;line-height:13px;color:#2a1f1f;">KIEMKE</div><svg style="left:15px;top:208px" width="16" height="13" viewBox="0 0 16 13"><rect x="0" y="0" width="16" height="13" fill="#8e9dc1"/><rect x="0" y="0" width="16" height="2.700" fill="#7487b7"/><path d="M15.500 2v10.500H.5" fill="none" stroke="#34476f" stroke-width="1"/><rect x="1" y="3.6" width="4" height="2" fill="#fff"/><rect x="6" y="3.6" width="4" height="2" fill="#fff"/><rect x="11" y="3.6" width="4" height="2" fill="#e3eafb"/><rect x="1" y="6.6" width="4" height="2" fill="#fff"/><rect x="6" y="6.6" width="4" height="2" fill="#fff"/><rect x="11" y="6.6" width="4" height="2" fill="#e3eafb"/><rect x="1" y="9.6" width="4" height="2" fill="#fff"/><rect x="6" y="9.6" width="4" height="2" fill="#fff"/><rect x="11" y="9.6" width="4" height="2" fill="#e3eafb"/><rect x="1" y="1" width="4" height="1" fill="#b9c4e0"/><rect x="6" y="1" width="4" height="1" fill="#b9c4e0"/><rect x="11" y="1" width="4" height="1" fill="#b9c4e0"/></svg><div class="t" style="letter-spacing:-0.105px;left:42.30px;top:209.80px;font-size:11px;line-height:13px;color:#2a1f1f;">NGUOIDUNG</div><svg style="left:15px;top:232px" width="16" height="13" viewBox="0 0 16 13"><rect x="0" y="0" width="16" height="13" fill="#8e9dc1"/><rect x="0" y="0" width="16" height="2.700" fill="#7487b7"/><path d="M15.500 2v10.500H.5" fill="none" stroke="#34476f" stroke-width="1"/><rect x="1" y="3.6" width="4" height="2" fill="#fff"/><rect x="6" y="3.6" width="4" height="2" fill="#fff"/><rect x="11" y="3.6" width="4" height="2" fill="#e3eafb"/><rect x="1" y="6.6" width="4" height="2" fill="#fff"/><rect x="6" y="6.6" width="4" height="2" fill="#fff"/><rect x="11" y="6.6" width="4" height="2" fill="#e3eafb"/><rect x="1" y="9.6" width="4" height="2" fill="#fff"/><rect x="6" y="9.6" width="4" height="2" fill="#fff"/><rect x="11" y="9.6" width="4" height="2" fill="#e3eafb"/><rect x="1" y="1" width="4" height="1" fill="#b9c4e0"/><rect x="6" y="1" width="4" height="1" fill="#b9c4e0"/><rect x="11" y="1" width="4" height="1" fill="#b9c4e0"/></svg><div class="t" style="letter-spacing:-0.279px;left:42.30px;top:233.80px;font-size:11px;line-height:13px;color:#2a1f1f;">PHONGKHOA</div><svg style="left:15px;top:256px" width="16" height="13" viewBox="0 0 16 13"><rect x="0" y="0" width="16" height="13" fill="#8e9dc1"/><rect x="0" y="0" width="16" height="2.700" fill="#7487b7"/><path d="M15.500 2v10.500H.5" fill="none" stroke="#34476f" stroke-width="1"/><rect x="1" y="3.6" width="4" height="2" fill="#fff"/><rect x="6" y="3.6" width="4" height="2" fill="#fff"/><rect x="11" y="3.6" width="4" height="2" fill="#e3eafb"/><rect x="1" y="6.6" width="4" height="2" fill="#fff"/><rect x="6" y="6.6" width="4" height="2" fill="#fff"/><rect x="11" y="6.6" width="4" height="2" fill="#e3eafb"/><rect x="1" y="9.6" width="4" height="2" fill="#fff"/><rect x="6" y="9.6" width="4" height="2" fill="#fff"/><rect x="11" y="9.6" width="4" height="2" fill="#e3eafb"/><rect x="1" y="1" width="4" height="1" fill="#b9c4e0"/><rect x="6" y="1" width="4" height="1" fill="#b9c4e0"/><rect x="11" y="1" width="4" height="1" fill="#b9c4e0"/></svg><div class="t" style="transform:scaleX(0.9183);transform-origin:0 50%;left:42.30px;top:257.80px;font-size:11px;line-height:13px;color:#2a1f1f;">THANHLY</div><svg style="left:15px;top:280px" width="16" height="13" viewBox="0 0 16 13"><rect x="0" y="0" width="16" height="13" fill="#8e9dc1"/><rect x="0" y="0" width="16" height="2.700" fill="#7487b7"/><path d="M15.500 2v10.500H.5" fill="none" stroke="#34476f" stroke-width="1"/><rect x="1" y="3.6" width="4" height="2" fill="#fff"/><rect x="6" y="3.6" width="4" height="2" fill="#fff"/><rect x="11" y="3.6" width="4" height="2" fill="#e3eafb"/><rect x="1" y="6.6" width="4" height="2" fill="#fff"/><rect x="6" y="6.6" width="4" height="2" fill="#fff"/><rect x="11" y="6.6" width="4" height="2" fill="#e3eafb"/><rect x="1" y="9.6" width="4" height="2" fill="#fff"/><rect x="6" y="9.6" width="4" height="2" fill="#fff"/><rect x="11" y="9.6" width="4" height="2" fill="#e3eafb"/><rect x="1" y="1" width="4" height="1" fill="#b9c4e0"/><rect x="6" y="1" width="4" height="1" fill="#b9c4e0"/><rect x="11" y="1" width="4" height="1" fill="#b9c4e0"/></svg><div class="t" style="transform:scaleX(0.8774);transform-origin:0 50%;left:42.30px;top:281.80px;font-size:11px;line-height:13px;color:#2a1f1f;">THIETBI</div><div class="a" style="left:4px;top:301px;width:174px;height:1px;background:#5c6470"></div><div class="navhdr" style="top:303px"></div><div class="t" style="letter-spacing:-0.256px;left:13.60px;top:304.00px;font-size:12px;line-height:14px;color:#1c3d7e;font-weight:bold;">Queries</div><svg style="left:157.5px;top:308px" width="8" height="8" viewBox="0 0 8 8"><path d="M.5 3.800l3.500-3.300l3.500 3.300M.5 7.500l3.500-3.300l3.500 3.300" fill="none" stroke="#3a3f4a" stroke-width="1.100"/></svg><svg style="left:15px;top:323px" width="16" height="15" viewBox="0 0 16 15"><rect x="5" y="0" width="10.900" height="10.900" fill="#fff"/><rect x="5" y="0" width="10.900" height="2.600" fill="#2f8a8c"/><rect x="6.3" y="1" width="8" height=".8" fill="#7fc1c0"/><path d="M15.4 2V10.4H5.3" fill="none" stroke="#2d4566" stroke-width="1"/><path d="M5.4 2.6V10.4" stroke="#8fa0b8" stroke-width=".8"/><rect x="7" y="4" width="2" height=".9" fill="#9aa7bd"/><rect x="11.5" y="4" width="2" height=".9" fill="#9aa7bd"/><rect x="7" y="6.1" width="2" height=".9" fill="#9aa7bd"/><rect x="11.5" y="6.1" width="2" height=".9" fill="#9aa7bd"/><rect x="7" y="8.2" width="2" height=".9" fill="#9aa7bd"/><rect x="11.5" y="8.2" width="2" height=".9" fill="#9aa7bd"/><rect x="0" y="4" width="10.900" height="10.900" fill="#fff"/><rect x="0" y="4" width="10.900" height="2.600" fill="#2f8a8c"/><rect x="1.3" y="5" width="8" height=".8" fill="#7fc1c0"/><path d="M10.4 6V14.4H0.3" fill="none" stroke="#2d4566" stroke-width="1"/><path d="M0.4 6.6V14.4" stroke="#8fa0b8" stroke-width=".8"/><rect x="2" y="8" width="2" height=".9" fill="#9aa7bd"/><rect x="6.5" y="8" width="2" height=".9" fill="#9aa7bd"/><rect x="2" y="10.1" width="2" height=".9" fill="#9aa7bd"/><rect x="6.5" y="10.1" width="2" height=".9" fill="#9aa7bd"/><rect x="2" y="12.2" width="2" height=".9" fill="#9aa7bd"/><rect x="6.5" y="12.2" width="2" height=".9" fill="#9aa7bd"/></svg><div class="t" style="letter-spacing:0.087px;left:42.30px;top:324.80px;font-size:11px;line-height:13px;color:#2a1f1f;">q_nhap_nam</div><svg style="left:15px;top:347px" width="16" height="15" viewBox="0 0 16 15"><rect x="5" y="0" width="10.900" height="10.900" fill="#fff"/><rect x="5" y="0" width="10.900" height="2.600" fill="#2f8a8c"/><rect x="6.3" y="1" width="8" height=".8" fill="#7fc1c0"/><path d="M15.4 2V10.4H5.3" fill="none" stroke="#2d4566" stroke-width="1"/><path d="M5.4 2.6V10.4" stroke="#8fa0b8" stroke-width=".8"/><rect x="7" y="4" width="2" height=".9" fill="#9aa7bd"/><rect x="11.5" y="4" width="2" height=".9" fill="#9aa7bd"/><rect x="7" y="6.1" width="2" height=".9" fill="#9aa7bd"/><rect x="11.5" y="6.1" width="2" height=".9" fill="#9aa7bd"/><rect x="7" y="8.2" width="2" height=".9" fill="#9aa7bd"/><rect x="11.5" y="8.2" width="2" height=".9" fill="#9aa7bd"/><rect x="0" y="4" width="10.900" height="10.900" fill="#fff"/><rect x="0" y="4" width="10.900" height="2.600" fill="#2f8a8c"/><rect x="1.3" y="5" width="8" height=".8" fill="#7fc1c0"/><path d="M10.4 6V14.4H0.3" fill="none" stroke="#2d4566" stroke-width="1"/><path d="M0.4 6.6V14.4" stroke="#8fa0b8" stroke-width=".8"/><rect x="2" y="8" width="2" height=".9" fill="#9aa7bd"/><rect x="6.5" y="8" width="2" height=".9" fill="#9aa7bd"/><rect x="2" y="10.1" width="2" height=".9" fill="#9aa7bd"/><rect x="6.5" y="10.1" width="2" height=".9" fill="#9aa7bd"/><rect x="2" y="12.2" width="2" height=".9" fill="#9aa7bd"/><rect x="6.5" y="12.2" width="2" height=".9" fill="#9aa7bd"/></svg><div class="t" style="letter-spacing:0.452px;left:42.30px;top:348.80px;font-size:11px;line-height:13px;color:#2a1f1f;">q_nhaptb</div><svg style="left:15px;top:371px" width="16" height="15" viewBox="0 0 16 15"><rect x="5" y="0" width="10.900" height="10.900" fill="#fff"/><rect x="5" y="0" width="10.900" height="2.600" fill="#2f8a8c"/><rect x="6.3" y="1" width="8" height=".8" fill="#7fc1c0"/><path d="M15.4 2V10.4H5.3" fill="none" stroke="#2d4566" stroke-width="1"/><path d="M5.4 2.6V10.4" stroke="#8fa0b8" stroke-width=".8"/><rect x="7" y="4" width="2" height=".9" fill="#9aa7bd"/><rect x="11.5" y="4" width="2" height=".9" fill="#9aa7bd"/><rect x="7" y="6.1" width="2" height=".9" fill="#9aa7bd"/><rect x="11.5" y="6.1" width="2" height=".9" fill="#9aa7bd"/><rect x="7" y="8.2" width="2" height=".9" fill="#9aa7bd"/><rect x="11.5" y="8.2" width="2" height=".9" fill="#9aa7bd"/><rect x="0" y="4" width="10.900" height="10.900" fill="#fff"/><rect x="0" y="4" width="10.900" height="2.600" fill="#2f8a8c"/><rect x="1.3" y="5" width="8" height=".8" fill="#7fc1c0"/><path d="M10.4 6V14.4H0.3" fill="none" stroke="#2d4566" stroke-width="1"/><path d="M0.4 6.6V14.4" stroke="#8fa0b8" stroke-width=".8"/><rect x="2" y="8" width="2" height=".9" fill="#9aa7bd"/><rect x="6.5" y="8" width="2" height=".9" fill="#9aa7bd"/><rect x="2" y="10.1" width="2" height=".9" fill="#9aa7bd"/><rect x="6.5" y="10.1" width="2" height=".9" fill="#9aa7bd"/><rect x="2" y="12.2" width="2" height=".9" fill="#9aa7bd"/><rect x="6.5" y="12.2" width="2" height=".9" fill="#9aa7bd"/></svg><div class="t" style="letter-spacing:0.182px;left:42.30px;top:372.80px;font-size:11px;line-height:13px;color:#2a1f1f;">q_thanhly_nam</div><svg style="left:15px;top:395px" width="16" height="15" viewBox="0 0 16 15"><rect x="5" y="0" width="10.900" height="10.900" fill="#fff"/><rect x="5" y="0" width="10.900" height="2.600" fill="#2f8a8c"/><rect x="6.3" y="1" width="8" height=".8" fill="#7fc1c0"/><path d="M15.4 2V10.4H5.3" fill="none" stroke="#2d4566" stroke-width="1"/><path d="M5.4 2.6V10.4" stroke="#8fa0b8" stroke-width=".8"/><rect x="7" y="4" width="2" height=".9" fill="#9aa7bd"/><rect x="11.5" y="4" width="2" height=".9" fill="#9aa7bd"/><rect x="7" y="6.1" width="2" height=".9" fill="#9aa7bd"/><rect x="11.5" y="6.1" width="2" height=".9" fill="#9aa7bd"/><rect x="7" y="8.2" width="2" height=".9" fill="#9aa7bd"/><rect x="11.5" y="8.2" width="2" height=".9" fill="#9aa7bd"/><rect x="0" y="4" width="10.900" height="10.900" fill="#fff"/><rect x="0" y="4" width="10.900" height="2.600" fill="#2f8a8c"/><rect x="1.3" y="5" width="8" height=".8" fill="#7fc1c0"/><path d="M10.4 6V14.4H0.3" fill="none" stroke="#2d4566" stroke-width="1"/><path d="M0.4 6.6V14.4" stroke="#8fa0b8" stroke-width=".8"/><rect x="2" y="8" width="2" height=".9" fill="#9aa7bd"/><rect x="6.5" y="8" width="2" height=".9" fill="#9aa7bd"/><rect x="2" y="10.1" width="2" height=".9" fill="#9aa7bd"/><rect x="6.5" y="10.1" width="2" height=".9" fill="#9aa7bd"/><rect x="2" y="12.2" width="2" height=".9" fill="#9aa7bd"/><rect x="6.5" y="12.2" width="2" height=".9" fill="#9aa7bd"/></svg><div class="t" style="letter-spacing:-0.019px;left:42.30px;top:396.80px;font-size:11px;line-height:13px;color:#2a1f1f;">q_tk_tb_ma</div><svg style="left:15px;top:419px" width="16" height="15" viewBox="0 0 16 15"><rect x="5" y="0" width="10.900" height="10.900" fill="#fff"/><rect x="5" y="0" width="10.900" height="2.600" fill="#2f8a8c"/><rect x="6.3" y="1" width="8" height=".8" fill="#7fc1c0"/><path d="M15.4 2V10.4H5.3" fill="none" stroke="#2d4566" stroke-width="1"/><path d="M5.4 2.6V10.4" stroke="#8fa0b8" stroke-width=".8"/><rect x="7" y="4" width="2" height=".9" fill="#9aa7bd"/><rect x="11.5" y="4" width="2" height=".9" fill="#9aa7bd"/><rect x="7" y="6.1" width="2" height=".9" fill="#9aa7bd"/><rect x="11.5" y="6.1" width="2" height=".9" fill="#9aa7bd"/><rect x="7" y="8.2" width="2" height=".9" fill="#9aa7bd"/><rect x="11.5" y="8.2" width="2" height=".9" fill="#9aa7bd"/><rect x="0" y="4" width="10.900" height="10.900" fill="#fff"/><rect x="0" y="4" width="10.900" height="2.600" fill="#2f8a8c"/><rect x="1.3" y="5" width="8" height=".8" fill="#7fc1c0"/><path d="M10.4 6V14.4H0.3" fill="none" stroke="#2d4566" stroke-width="1"/><path d="M0.4 6.6V14.4" stroke="#8fa0b8" stroke-width=".8"/><rect x="2" y="8" width="2" height=".9" fill="#9aa7bd"/><rect x="6.5" y="8" width="2" height=".9" fill="#9aa7bd"/><rect x="2" y="10.1" width="2" height=".9" fill="#9aa7bd"/><rect x="6.5" y="10.1" width="2" height=".9" fill="#9aa7bd"/><rect x="2" y="12.2" width="2" height=".9" fill="#9aa7bd"/><rect x="6.5" y="12.2" width="2" height=".9" fill="#9aa7bd"/></svg><div class="t" style="letter-spacing:0.191px;left:42.30px;top:420.80px;font-size:11px;line-height:13px;color:#2a1f1f;">q_tk_tb_ten</div><svg style="left:15px;top:443px" width="16" height="15" viewBox="0 0 16 15"><rect x="5" y="0" width="10.900" height="10.900" fill="#fff"/><rect x="5" y="0" width="10.900" height="2.600" fill="#2f8a8c"/><rect x="6.3" y="1" width="8" height=".8" fill="#7fc1c0"/><path d="M15.4 2V10.4H5.3" fill="none" stroke="#2d4566" stroke-width="1"/><path d="M5.4 2.6V10.4" stroke="#8fa0b8" stroke-width=".8"/><rect x="7" y="4" width="2" height=".9" fill="#9aa7bd"/><rect x="11.5" y="4" width="2" height=".9" fill="#9aa7bd"/><rect x="7" y="6.1" width="2" height=".9" fill="#9aa7bd"/><rect x="11.5" y="6.1" width="2" height=".9" fill="#9aa7bd"/><rect x="7" y="8.2" width="2" height=".9" fill="#9aa7bd"/><rect x="11.5" y="8.2" width="2" height=".9" fill="#9aa7bd"/><rect x="0" y="4" width="10.900" height="10.900" fill="#fff"/><rect x="0" y="4" width="10.900" height="2.600" fill="#2f8a8c"/><rect x="1.3" y="5" width="8" height=".8" fill="#7fc1c0"/><path d="M10.4 6V14.4H0.3" fill="none" stroke="#2d4566" stroke-width="1"/><path d="M0.4 6.6V14.4" stroke="#8fa0b8" stroke-width=".8"/><rect x="2" y="8" width="2" height=".9" fill="#9aa7bd"/><rect x="6.5" y="8" width="2" height=".9" fill="#9aa7bd"/><rect x="2" y="10.1" width="2" height=".9" fill="#9aa7bd"/><rect x="6.5" y="10.1" width="2" height=".9" fill="#9aa7bd"/><rect x="2" y="12.2" width="2" height=".9" fill="#9aa7bd"/><rect x="6.5" y="12.2" width="2" height=".9" fill="#9aa7bd"/></svg><div class="t" style="letter-spacing:0.543px;left:42.30px;top:444.80px;font-size:11px;line-height:13px;color:#2a1f1f;">soluong_tỉnhtrang</div><svg style="left:15px;top:467px" width="16" height="15" viewBox="0 0 16 15"><rect x="5" y="0" width="10.900" height="10.900" fill="#fff"/><rect x="5" y="0" width="10.900" height="2.600" fill="#2f8a8c"/><rect x="6.3" y="1" width="8" height=".8" fill="#7fc1c0"/><path d="M15.4 2V10.4H5.3" fill="none" stroke="#2d4566" stroke-width="1"/><path d="M5.4 2.6V10.4" stroke="#8fa0b8" stroke-width=".8"/><rect x="7" y="4" width="2" height=".9" fill="#9aa7bd"/><rect x="11.5" y="4" width="2" height=".9" fill="#9aa7bd"/><rect x="7" y="6.1" width="2" height=".9" fill="#9aa7bd"/><rect x="11.5" y="6.1" width="2" height=".9" fill="#9aa7bd"/><rect x="7" y="8.2" width="2" height=".9" fill="#9aa7bd"/><rect x="11.5" y="8.2" width="2" height=".9" fill="#9aa7bd"/><rect x="0" y="4" width="10.900" height="10.900" fill="#fff"/><rect x="0" y="4" width="10.900" height="2.600" fill="#2f8a8c"/><rect x="1.3" y="5" width="8" height=".8" fill="#7fc1c0"/><path d="M10.4 6V14.4H0.3" fill="none" stroke="#2d4566" stroke-width="1"/><path d="M0.4 6.6V14.4" stroke="#8fa0b8" stroke-width=".8"/><rect x="2" y="8" width="2" height=".9" fill="#9aa7bd"/><rect x="6.5" y="8" width="2" height=".9" fill="#9aa7bd"/><rect x="2" y="10.1" width="2" height=".9" fill="#9aa7bd"/><rect x="6.5" y="10.1" width="2" height=".9" fill="#9aa7bd"/><rect x="2" y="12.2" width="2" height=".9" fill="#9aa7bd"/><rect x="6.5" y="12.2" width="2" height=".9" fill="#9aa7bd"/></svg><div class="t" style="letter-spacing:0.319px;left:42.30px;top:468.80px;font-size:11px;line-height:13px;color:#2a1f1f;">tenpk_tly</div><svg style="left:15px;top:491px" width="16" height="15" viewBox="0 0 16 15"><rect x="5" y="0" width="10.900" height="10.900" fill="#fff"/><rect x="5" y="0" width="10.900" height="2.600" fill="#2f8a8c"/><rect x="6.3" y="1" width="8" height=".8" fill="#7fc1c0"/><path d="M15.4 2V10.4H5.3" fill="none" stroke="#2d4566" stroke-width="1"/><path d="M5.4 2.6V10.4" stroke="#8fa0b8" stroke-width=".8"/><rect x="7" y="4" width="2" height=".9" fill="#9aa7bd"/><rect x="11.5" y="4" width="2" height=".9" fill="#9aa7bd"/><rect x="7" y="6.1" width="2" height=".9" fill="#9aa7bd"/><rect x="11.5" y="6.1" width="2" height=".9" fill="#9aa7bd"/><rect x="7" y="8.2" width="2" height=".9" fill="#9aa7bd"/><rect x="11.5" y="8.2" width="2" height=".9" fill="#9aa7bd"/><rect x="0" y="4" width="10.900" height="10.900" fill="#fff"/><rect x="0" y="4" width="10.900" height="2.600" fill="#2f8a8c"/><rect x="1.3" y="5" width="8" height=".8" fill="#7fc1c0"/><path d="M10.4 6V14.4H0.3" fill="none" stroke="#2d4566" stroke-width="1"/><path d="M0.4 6.6V14.4" stroke="#8fa0b8" stroke-width=".8"/><rect x="2" y="8" width="2" height=".9" fill="#9aa7bd"/><rect x="6.5" y="8" width="2" height=".9" fill="#9aa7bd"/><rect x="2" y="10.1" width="2" height=".9" fill="#9aa7bd"/><rect x="6.5" y="10.1" width="2" height=".9" fill="#9aa7bd"/><rect x="2" y="12.2" width="2" height=".9" fill="#9aa7bd"/><rect x="6.5" y="12.2" width="2" height=".9" fill="#9aa7bd"/></svg><div class="t" style="letter-spacing:0.390px;left:42.30px;top:492.80px;font-size:11px;line-height:13px;color:#2a1f1f;">tentb_tly</div><div class="a" style="left:4px;top:512px;width:174px;height:1px;background:#5c6470"></div><div class="navhdr" style="top:514px"></div><div class="t" style="transform:scaleX(0.9244);transform-origin:0 50%;left:13.60px;top:515.00px;font-size:12px;line-height:14px;color:#1c3d7e;font-weight:bold;">Forms</div><svg style="left:157.5px;top:519px" width="8" height="8" viewBox="0 0 8 8"><path d="M.5 3.800l3.500-3.300l3.500 3.300M.5 7.500l3.500-3.300l3.500 3.300" fill="none" stroke="#3a3f4a" stroke-width="1.100"/></svg><div class="a" style="left:4px;top:531px;width:174px;height:23.500px;background:#eaecf1"></div><svg style="left:15px;top:534px" width="15" height="14" viewBox="0 0 15 14"><rect x=".5" y=".5" width="14" height="12.500" fill="#fff" stroke="#8a93a8"/><rect x=".5" y=".5" width="14" height="2.500" fill="#c4457b"/><rect x="1" y="11" width="13" height="1.500" fill="#dfe4ef"/><path d="M2.500 6h3.500M2.500 9.500h3.500" stroke="#5d78ad" stroke-width="1"/><rect x="7.500" y="4.800" width="4.500" height="2.200" fill="#fff" stroke="#5d78ad" stroke-width=".8"/><rect x="7.500" y="8.300" width="4.500" height="2.200" fill="#fff" stroke="#5d78ad" stroke-width=".8"/></svg><div class="t" style="letter-spacing:0.296px;left:42.30px;top:536.30px;font-size:11px;line-height:13px;color:#2a1f1f;">capnhat_tb</div><svg style="left:15px;top:558px" width="15" height="14" viewBox="0 0 15 14"><rect x=".5" y=".5" width="14" height="12.500" fill="#fff" stroke="#8a93a8"/><rect x=".5" y=".5" width="14" height="2.500" fill="#c4457b"/><rect x="1" y="11" width="13" height="1.500" fill="#dfe4ef"/><path d="M2.500 6h3.500M2.500 9.500h3.500" stroke="#5d78ad" stroke-width="1"/><rect x="7.500" y="4.800" width="4.500" height="2.200" fill="#fff" stroke="#5d78ad" stroke-width=".8"/><rect x="7.500" y="8.300" width="4.500" height="2.200" fill="#fff" stroke="#5d78ad" stroke-width=".8"/></svg><div class="t" style="letter-spacing:0.127px;left:42.30px;top:560.30px;font-size:11px;line-height:13px;color:#2a1f1f;">ds_tb_nhap_nam</div><svg style="left:15px;top:582px" width="15" height="14" viewBox="0 0 15 14"><rect x=".5" y=".5" width="14" height="12.500" fill="#fff" stroke="#8a93a8"/><rect x=".5" y=".5" width="14" height="2.500" fill="#c4457b"/><rect x="1" y="11" width="13" height="1.500" fill="#dfe4ef"/><path d="M2.500 6h3.500M2.500 9.500h3.500" stroke="#5d78ad" stroke-width="1"/><rect x="7.500" y="4.800" width="4.500" height="2.200" fill="#fff" stroke="#5d78ad" stroke-width=".8"/><rect x="7.500" y="8.300" width="4.500" height="2.200" fill="#fff" stroke="#5d78ad" stroke-width=".8"/></svg><div class="t" style="letter-spacing:0.236px;left:42.30px;top:584.30px;font-size:11px;line-height:13px;color:#2a1f1f;">ds_tb_sudung_pk</div><svg style="left:15px;top:606px" width="15" height="14" viewBox="0 0 15 14"><rect x=".5" y=".5" width="14" height="12.500" fill="#fff" stroke="#8a93a8"/><rect x=".5" y=".5" width="14" height="2.500" fill="#c4457b"/><rect x="1" y="11" width="13" height="1.500" fill="#dfe4ef"/><path d="M2.500 6h3.500M2.500 9.500h3.500" stroke="#5d78ad" stroke-width="1"/><rect x="7.500" y="4.800" width="4.500" height="2.200" fill="#fff" stroke="#5d78ad" stroke-width=".8"/><rect x="7.500" y="8.300" width="4.500" height="2.200" fill="#fff" stroke="#5d78ad" stroke-width=".8"/></svg><div class="t" style="letter-spacing:0.152px;left:42.30px;top:608.30px;font-size:11px;line-height:13px;color:#2a1f1f;">ds_tb_thanhly_nam</div><svg style="left:15px;top:630px" width="15" height="14" viewBox="0 0 15 14"><rect x=".5" y=".5" width="14" height="12.500" fill="#fff" stroke="#8a93a8"/><rect x=".5" y=".5" width="14" height="2.500" fill="#c4457b"/><rect x="1" y="11" width="13" height="1.500" fill="#dfe4ef"/><path d="M2.500 6h3.500M2.500 9.500h3.500" stroke="#5d78ad" stroke-width="1"/><rect x="7.500" y="4.800" width="4.500" height="2.200" fill="#fff" stroke="#5d78ad" stroke-width=".8"/><rect x="7.500" y="8.300" width="4.500" height="2.200" fill="#fff" stroke="#5d78ad" stroke-width=".8"/></svg><div class="t" style="letter-spacing:0.204px;left:42.30px;top:632.30px;font-size:11px;line-height:13px;color:#2a1f1f;">ds_tb_thanhly_pk</div><svg style="left:15px;top:654px" width="15" height="14" viewBox="0 0 15 14"><rect x=".5" y=".5" width="14" height="12.500" fill="#fff" stroke="#8a93a8"/><rect x=".5" y=".5" width="14" height="2.500" fill="#c4457b"/><rect x="1" y="11" width="13" height="1.500" fill="#dfe4ef"/><path d="M2.500 6h3.500M2.500 9.500h3.500" stroke="#5d78ad" stroke-width="1"/><rect x="7.500" y="4.800" width="4.500" height="2.200" fill="#fff" stroke="#5d78ad" stroke-width=".8"/><rect x="7.500" y="8.300" width="4.500" height="2.200" fill="#fff" stroke="#5d78ad" stroke-width=".8"/></svg><div class="t" style="transform:scaleX(0.8720);transform-origin:0 50%;left:42.30px;top:656.30px;font-size:11px;line-height:13px;color:#2a1f1f;">f_</div><svg style="left:15px;top:678px" width="15" height="14" viewBox="0 0 15 14"><rect x=".5" y=".5" width="14" height="12.500" fill="#fff" stroke="#8a93a8"/><rect x=".5" y=".5" width="14" height="2.500" fill="#c4457b"/><rect x="1" y="11" width="13" height="1.500" fill="#dfe4ef"/><path d="M2.500 6h3.500M2.500 9.500h3.500" stroke="#5d78ad" stroke-width="1"/><rect x="7.500" y="4.800" width="4.500" height="2.200" fill="#fff" stroke="#5d78ad" stroke-width=".8"/><rect x="7.500" y="8.300" width="4.500" height="2.200" fill="#fff" stroke="#5d78ad" stroke-width=".8"/></svg><div class="t" style="letter-spacing:-0.236px;left:42.30px;top:680.30px;font-size:11px;line-height:13px;color:#2a1f1f;">Form1</div><div class="a" style="left:15px;top:703px;width:15px;height:3px;background:#c4457b;border:1px solid #8a93a8;border-bottom:none"></div><div class="a" style="left:179px;top:162px;width:15px;height:544px;background:#f3f3f4;border-left:1px solid #e3e5e9"></div><div class="a" style="left:179.300px;top:163px;width:14.400px;height:15px;border:1px solid #c6cad1;border-radius:2px;background:linear-gradient(to right,#f8f8f9,#e6e7e9)"></div><svg style="left:182.5px;top:168px" width="8" height="5" viewBox="0 0 8 5"><path d="M0 4.500h8l-4-4.500z" fill="#3b4a73"/></svg><div class="a" style="left:179.500px;top:179px;width:14px;height:293px;border:1px solid #b9bdc5;border-radius:2px;background:linear-gradient(to right,#f7f7f8,#e5e6e8)"></div><div class="a" style="left:183px;top:322px;width:8px;height:1px;background:#8a8a8a"></div><div class="a" style="left:183px;top:324px;width:8px;height:1px;background:#8a8a8a"></div><div class="a" style="left:183px;top:326px;width:8px;height:1px;background:#8a8a8a"></div><div class="a" style="left:183px;top:328px;width:8px;height:1px;background:#8a8a8a"></div><div class="a" style="left:179.300px;top:688.500px;width:14.400px;height:16px;border:1px solid #c6cad1;border-radius:2px;background:linear-gradient(to right,#f8f8f9,#e6e7e9)"></div><svg style="left:182.5px;top:694px" width="8" height="5" viewBox="0 0 8 5"><path d="M0 0h8l-4 4.500z" fill="#3b4a73"/></svg><div class="a" style="left:195px;top:138px;width:1px;height:568px;background:#c9ced6"></div><div class="a" style="left:196px;top:138px;width:3px;height:568px;background:#eceef1"></div><div class="a" style="left:199px;top:138px;width:2px;height:568px;background:#8e96a4"></div>
<!-- part_doc -->
<svg style="left:1350px;top:144.5px" width="8" height="8" viewBox="0 0 8 8"><path d="M.8.800l6.400 6.400M7.200.800L.8 7.200" stroke="#3a3a3a" stroke-width="1.400"/></svg><svg style="left:201.3px;top:137.3px" width="105" height="23.4" viewBox="0 0 105 23.4"><defs><linearGradient id="tg" x1="0" y1="0" x2="0" y2="1"><stop offset="0" stop-color="#fdf2e0"/><stop offset=".18" stop-color="#fcd9a8"/><stop offset=".5" stop-color="#f9aa4b"/><stop offset=".66" stop-color="#f9b45f"/><stop offset=".85" stop-color="#f6d3a4"/><stop offset="1" stop-color="#efe7d9"/></linearGradient></defs><path d="M0 23.400V4q0-4 4-4h81.500c5 0 6.500 4.500 9 10s5 13.400 9.500 13.400z" fill="url(#tg)"/><path d="M.4 23.400V4q0-3.600 3.600-3.600h81.500c4.700 0 6.200 4.300 8.700 9.800s5 13.200 9.800 13.200" fill="none" stroke="#8d8f94" stroke-width=".7" opacity=".55"/></svg><svg style="left:207.8px;top:141.7px" width="15" height="14" viewBox="0 0 15 14"><rect x=".5" y=".5" width="14" height="12.500" fill="#fff" stroke="#8a93a8"/><rect x=".5" y=".5" width="14" height="2.500" fill="#c4457b"/><rect x="1" y="11" width="13" height="1.500" fill="#dfe4ef"/><path d="M2.500 6h3.500M2.500 9.500h3.500" stroke="#5d78ad" stroke-width="1"/><rect x="7.500" y="4.800" width="4.500" height="2.200" fill="#fff" stroke="#5d78ad" stroke-width=".8"/><rect x="7.500" y="8.300" width="4.500" height="2.200" fill="#fff" stroke="#5d78ad" stroke-width=".8"/></svg><div class="t" style="transform:scaleX(0.8983);transform-origin:0 50%;left:231.20px;top:142.30px;font-size:12px;line-height:14px;color:#000;font-weight:bold;">capnhat_tb</div><div class="a" style="left:201px;top:160px;width:1165px;height:527px;background:#f0f0f0"></div><div class="a" style="left:303px;top:160px;width:1063px;height:1px;background:#868e9b"></div><div class="a" style="left:304px;top:161px;width:1062px;height:1px;background:#f9f9f9"></div><div class="a" style="left:201px;top:160.700px;width:18px;height:526.300px;background:#e9ecf1"></div><div class="a" style="left:219px;top:160.700px;width:1px;height:526.300px;background:#000"></div><svg style="left:209px;top:163.2px" width="6.5" height="11" viewBox="0 0 6.5 11"><path d="M0 0l6.300 5.500l-6.300 5.500z" fill="#000"/></svg><div class="t" style="letter-spacing:0.032px;left:447.50px;top:170.50px;font-size:17.3px;line-height:22px;color:#2e3192;font-weight:bold;">CẬP NHẬT THIẾT BỊ</div><div class="t" style="letter-spacing:0.339px;left:246.40px;top:214.00px;font-size:13.5px;line-height:18px;color:#1a1a1a;">Mã thiết bị:</div><div class="t" style="letter-spacing:0.276px;left:246.40px;top:238.50px;font-size:13.5px;line-height:18px;color:#1a1a1a;">Tên thiết bị</div><div class="t" style="letter-spacing:-0.218px;left:246.40px;top:263.50px;font-size:13.5px;line-height:18px;color:#1a1a1a;">Đặc tính :</div><div class="t" style="letter-spacing:-0.091px;left:470.00px;top:214.00px;font-size:13.5px;line-height:18px;color:#1a1a1a;">Ngày nhập :</div><div class="t" style="letter-spacing:-0.217px;left:470.00px;top:238.50px;font-size:13.5px;line-height:18px;color:#1a1a1a;">Số lượng :</div><div class="t" style="letter-spacing:-0.078px;left:470.00px;top:263.50px;font-size:13.5px;line-height:18px;color:#1a1a1a;">Đơn giá:</div><div class="t" style="letter-spacing:0.009px;left:470.00px;top:288.50px;font-size:13.5px;line-height:18px;color:#1a1a1a;">Mã phòng khoa :</div><div class="inp" style="left:326px;top:213px;width:118px;height:21px"></div><div class="inp" style="left:326px;top:238px;width:118px;height:21px"></div><div class="inp" style="left:326px;top:263px;width:118px;height:47px"></div><div class="inp" style="left:575px;top:213px;width:114px;height:21px"></div><div class="inp" style="left:575px;top:238px;width:114px;height:21px"></div><div class="inp" style="left:575px;top:263px;width:114px;height:21px"></div><div class="inp" style="left:575px;top:288px;width:114px;height:21px"></div><div class="t" style="transform:scaleX(0.9357);transform-origin:0 50%;left:328.30px;top:215.00px;font-size:13.5px;line-height:18px;color:#000;">0002</div><div class="t" style="transform:scaleX(0.9482);transform-origin:0 50%;left:328.30px;top:240.00px;font-size:13.5px;line-height:18px;color:#1a1ae6;">MÁY TÍNH</div><div class="t" style="letter-spacing:0.046px;left:328.30px;top:265.00px;font-size:13.5px;line-height:18px;color:#000;">china</div><div class="t" style="letter-spacing:0.044px;left:577.50px;top:215.00px;font-size:13.5px;line-height:18px;color:#000;">30/12/2016</div><div class="t" style="left:577.50px;top:240.00px;font-size:13.5px;line-height:18px;color:#000;">3</div><div class="t" style="transform:scaleX(0.9324);transform-origin:0 50%;left:577.50px;top:265.00px;font-size:13.5px;line-height:18px;color:#000;">150,000,000</div><div class="t" style="left:651.50px;top:265.00px;font-size:13.5px;line-height:18px;color:#000;text-decoration:underline;">đ</div><div class="t" style="transform:scaleX(0.8613);transform-origin:0 50%;left:577.50px;top:290.00px;font-size:13.5px;line-height:18px;color:#000;">CNTT</div><div class="a" style="left:671.500px;top:289.500px;width:16.500px;height:18px;border:1px solid #a0a0a0;background:linear-gradient(to bottom,#f7f7f7,#dedede);box-shadow:inset 0 0 0 1px #fff"></div><div class="arr" style="left:676px;top:297px;border-left-width:3.500px;border-right-width:3.500px;border-top:4px solid #000"></div><div class="btn" style="left:709px;top:179px;width:49px;height:20px;"></div><div class="t" style="transform:scaleX(0.9181);transform-origin:0 50%;left:719.00px;top:181.60px;font-size:13.5px;line-height:18px;color:#f20d0d;font-weight:bold;">SỬA</div><div class="btn" style="left:704px;top:210px;width:48px;height:22.5px;"></div><div class="t" style="transform:scaleX(0.9282);transform-origin:0 50%;left:709.00px;top:211.40px;font-size:13.5px;line-height:18px;color:#f20d0d;font-weight:bold;">THÊM</div><div class="btn" style="left:704px;top:239px;width:48px;height:22.5px;"></div><div class="t" style="transform:scaleX(0.9077);transform-origin:0 50%;left:713.00px;top:240.50px;font-size:13.5px;line-height:18px;color:#f20d0d;font-weight:bold;">LƯU</div><div class="btn" style="left:704px;top:268px;width:48px;height:22.5px;"></div><div class="t" style="transform:scaleX(0.9298);transform-origin:0 50%;left:712.80px;top:269.50px;font-size:13.5px;line-height:18px;color:#f20d0d;font-weight:bold;">XÓA</div><div class="btn" style="left:704px;top:297px;width:48px;height:22.5px;"></div><div class="t" style="letter-spacing:-0.275px;left:707.20px;top:298.60px;font-size:13.5px;line-height:18px;color:#f20d0d;font-weight:bold;">ĐÓNG</div><div class="btn" style="left:764px;top:210px;width:36px;height:22.5px;"></div><div class="btn" style="left:764px;top:240px;width:36px;height:22.5px;"></div><div class="btn" style="left:764px;top:267px;width:36px;height:22.5px;"></div><div class="btn" style="left:764px;top:293px;width:36px;height:22.5px;"></div><div class="a" style="left:765px;top:241px;width:34px;height:20.500px;border:1px dotted #000"></div><svg style="left:774.5px;top:215px" width="11" height="12" viewBox="0 0 11 12"><rect x=".5" y=".5" width="2.500" height="11" fill="#5f86dd" stroke="#2047ab" stroke-width=".8"/><path d="M10 .5v11l-6.500-5.500z" fill="#4272d8" stroke="#2047ab" stroke-width=".8"/></svg><svg style="left:777px;top:245px" width="8" height="11" viewBox="0 0 8 11"><path d="M7.500 .5v10l-7-5z" fill="#4272d8" stroke="#2047ab" stroke-width=".8"/></svg><svg style="left:777.8px;top:272px" width="8" height="11" viewBox="0 0 8 11"><path d="M.5 .5v10l7-5z" fill="#4272d8" stroke="#2047ab" stroke-width=".8"/></svg><svg style="left:777.5px;top:298px" width="11" height="12" viewBox="0 0 11 12"><rect x="7" y=".5" width="2.500" height="11" fill="#5f86dd" stroke="#2047ab" stroke-width=".8"/><path d="M.5 .5v11l6.500-5.500z" fill="#4272d8" stroke="#2047ab" stroke-width=".8"/></svg><div class="t" style="transform:scaleX(0.8837);transform-origin:0 50%;left:250.40px;top:334.50px;font-size:13.5px;line-height:18px;color:#3a38a5;font-weight:bold;">DANH SÁCH THIẾT BỊ</div><div class="a" style="left:249px;top:360px;width:587px;height:156px;background:#fff;border:1px solid #9a9a9a"></div><div class="a" style="left:250px;top:380px;width:585px;height:19px;background:#000"></div><div class="cl" style="left:287px"></div><div class="cl" style="left:382px"></div><div class="cl" style="left:458px"></div><div class="cl" style="left:571px"></div><div class="cl" style="left:647px"></div><div class="cl" style="left:685px"></div><div class="cl" style="left:798px"></div><div class="t" style="letter-spacing:0.422px;left:253.80px;top:361.50px;font-size:13.5px;line-height:18px;color:#111;">matb</div><div class="t" style="letter-spacing:0.735px;left:290.80px;top:361.50px;font-size:13.5px;line-height:18px;color:#111;">tentb</div><div class="t" style="letter-spacing:0.297px;left:385.80px;top:361.50px;font-size:13.5px;line-height:18px;color:#111;">mapk</div><div class="t" style="letter-spacing:0.524px;left:461.80px;top:361.50px;font-size:13.5px;line-height:18px;color:#111;">dactinh</div><div class="t" style="letter-spacing:0.166px;left:574.80px;top:361.50px;font-size:13.5px;line-height:18px;color:#111;">ngaymua</div><div class="t" style="letter-spacing:0.186px;left:650.80px;top:361.50px;font-size:13.5px;line-height:18px;color:#111;">soluo</div><div class="t" style="letter-spacing:0.360px;left:688.80px;top:361.50px;font-size:13.5px;line-height:18px;color:#111;">dongia</div><div class="t" style="letter-spacing:0.585px;left:801.80px;top:361.50px;font-size:13.5px;line-height:18px;color:#111;">thoig</div><div class="t" style="transform:scaleX(0.8891);transform-origin:0 50%;left:253.80px;top:380.80px;font-size:13.5px;line-height:18px;color:#fff;">0002</div><div class="t" style="transform:scaleX(0.9482);transform-origin:0 50%;left:290.80px;top:380.80px;font-size:13.5px;line-height:18px;color:#fff;">MÁY TÍNH</div><div class="t" style="transform:scaleX(0.8669);transform-origin:0 50%;left:385.80px;top:380.80px;font-size:13.5px;line-height:18px;color:#fff;">CNTT</div><div class="t" style="letter-spacing:0.086px;left:461.80px;top:380.80px;font-size:13.5px;line-height:18px;color:#fff;">china</div><div class="t" style="letter-spacing:0.014px;left:574.80px;top:380.80px;font-size:13.5px;line-height:18px;color:#fff;">30/12/2016</div><div class="t" style="left:650.80px;top:380.80px;font-size:13.5px;line-height:18px;color:#fff;">3</div><div class="t" style="transform:scaleX(0.9506);transform-origin:0 50%;left:688.80px;top:380.80px;font-size:13.5px;line-height:18px;color:#fff;">150,000,000.00</div><div class="t" style="left:781.50px;top:380.80px;font-size:13.5px;line-height:18px;color:#fff;text-decoration:underline;">đ</div><div class="t" style="transform:scaleX(0.8891);transform-origin:0 50%;left:253.80px;top:399.80px;font-size:13.5px;line-height:18px;color:#000;">0006</div><div class="t" style="transform:scaleX(0.8614);transform-origin:0 50%;left:290.80px;top:399.80px;font-size:13.5px;line-height:18px;color:#000;">GHẾ</div><div class="t" style="transform:scaleX(0.9106);transform-origin:0 50%;left:385.80px;top:399.80px;font-size:13.5px;line-height:18px;color:#000;">GDQP</div><div class="t" style="letter-spacing:0.183px;left:574.80px;top:399.80px;font-size:13.5px;line-height:18px;color:#000;">7/11/2003</div><div class="t" style="transform:scaleX(0.9457);transform-origin:0 50%;left:650.80px;top:399.80px;font-size:13.5px;line-height:18px;color:#000;">10</div><div class="t" style="transform:scaleX(0.9502);transform-origin:0 50%;left:688.80px;top:399.80px;font-size:13.5px;line-height:18px;color:#000;">800,000.00</div><div class="t" style="left:756.50px;top:399.80px;font-size:13.5px;line-height:18px;color:#000;text-decoration:underline;">đ</div><div class="t" style="left:801.80px;top:399.80px;font-size:13.5px;line-height:18px;color:#000;">6</div><div class="t" style="transform:scaleX(0.8891);transform-origin:0 50%;left:253.80px;top:418.80px;font-size:13.5px;line-height:18px;color:#000;">0006</div><div class="t" style="transform:scaleX(0.8614);transform-origin:0 50%;left:290.80px;top:418.80px;font-size:13.5px;line-height:18px;color:#000;">GHẾ</div><div class="t" style="transform:scaleX(0.8989);transform-origin:0 50%;left:385.80px;top:418.80px;font-size:13.5px;line-height:18px;color:#000;">VLXD</div><div class="t" style="letter-spacing:0.269px;left:574.80px;top:418.80px;font-size:13.5px;line-height:18px;color:#000;">5/6/2011</div><div class="t" style="left:650.80px;top:418.80px;font-size:13.5px;line-height:18px;color:#000;">5</div><div class="t" style="transform:scaleX(0.9502);transform-origin:0 50%;left:688.80px;top:418.80px;font-size:13.5px;line-height:18px;color:#000;">800,000.00</div><div class="t" style="left:756.50px;top:418.80px;font-size:13.5px;line-height:18px;color:#000;text-decoration:underline;">đ</div><div class="t" style="left:801.80px;top:418.80px;font-size:13.5px;line-height:18px;color:#000;">5</div><div class="t" style="transform:scaleX(0.8891);transform-origin:0 50%;left:253.80px;top:437.80px;font-size:13.5px;line-height:18px;color:#000;">0008</div><div class="t" style="transform:scaleX(0.9124);transform-origin:0 50%;left:290.80px;top:437.80px;font-size:13.5px;line-height:18px;color:#000;">BÓNG ĐÈN</div><div class="t" style="transform:scaleX(0.9071);transform-origin:0 50%;left:385.80px;top:437.80px;font-size:13.5px;line-height:18px;color:#000;">CADU</div><div class="t" style="letter-spacing:0.071px;left:574.80px;top:437.80px;font-size:13.5px;line-height:18px;color:#000;">3/12/2016</div><div class="t" style="transform:scaleX(0.9457);transform-origin:0 50%;left:650.80px;top:437.80px;font-size:13.5px;line-height:18px;color:#000;">12</div><div class="t" style="transform:scaleX(0.9494);transform-origin:0 50%;left:688.80px;top:437.80px;font-size:13.5px;line-height:18px;color:#000;">121.00</div><div class="t" style="left:731.50px;top:437.80px;font-size:13.5px;line-height:18px;color:#000;text-decoration:underline;">đ</div><div class="t" style="transform:scaleX(0.8891);transform-origin:0 50%;left:253.80px;top:456.80px;font-size:13.5px;line-height:18px;color:#000;">0008</div><div class="t" style="transform:scaleX(0.9124);transform-origin:0 50%;left:290.80px;top:456.80px;font-size:13.5px;line-height:18px;color:#000;">BÓNG ĐÈN</div><div class="t" style="transform:scaleX(0.9308);transform-origin:0 50%;left:385.80px;top:456.80px;font-size:13.5px;line-height:18px;color:#000;">KTMT</div><div class="t" style="letter-spacing:0.014px;left:574.80px;top:456.80px;font-size:13.5px;line-height:18px;color:#000;">28/12/2016</div><div class="t" style="transform:scaleX(0.8844);transform-origin:0 50%;left:650.80px;top:456.80px;font-size:13.5px;line-height:18px;color:#000;width:34px;overflow:hidden;">20000</div><div class="t" style="letter-spacing:-0.216px;left:688.80px;top:456.80px;font-size:13.5px;line-height:18px;color:#000;">12.00</div><div class="t" style="left:725.00px;top:456.80px;font-size:13.5px;line-height:18px;color:#000;text-decoration:underline;">đ</div><div class="t" style="transform:scaleX(0.8891);transform-origin:0 50%;left:253.80px;top:475.80px;font-size:13.5px;line-height:18px;color:#000;">0012</div><div class="t" style="letter-spacing:-0.260px;left:290.80px;top:475.80px;font-size:13.5px;line-height:18px;color:#000;">MÁY IN</div><div class="t" style="transform:scaleX(0.8669);transform-origin:0 50%;left:385.80px;top:475.80px;font-size:13.5px;line-height:18px;color:#000;">CNTT</div><div class="t" style="letter-spacing:0.481px;left:461.80px;top:475.80px;font-size:13.5px;line-height:18px;color:#000;">xịn</div><div class="t" style="letter-spacing:0.071px;left:574.80px;top:475.80px;font-size:13.5px;line-height:18px;color:#000;">4/12/2016</div><div class="t" style="left:650.80px;top:475.80px;font-size:13.5px;line-height:18px;color:#000;">2</div><div class="t" style="transform:scaleX(0.9521);transform-origin:0 50%;left:688.80px;top:475.80px;font-size:13.5px;line-height:18px;color:#000;">12,000,000.00</div><div class="t" style="left:774.50px;top:475.80px;font-size:13.5px;line-height:18px;color:#000;text-decoration:underline;">đ</div><div class="t" style="transform:scaleX(0.8891);transform-origin:0 50%;left:253.80px;top:494.80px;font-size:13.5px;line-height:18px;color:#000;">0012</div><div class="t" style="letter-spacing:-0.260px;left:290.80px;top:494.80px;font-size:13.5px;line-height:18px;color:#000;">MÁY IN</div><div class="t" style="transform:scaleX(0.9202);transform-origin:0 50%;left:385.80px;top:494.80px;font-size:13.5px;line-height:18px;color:#000;">XDDD</div><div class="t" style="letter-spacing:0.481px;left:461.80px;top:494.80px;font-size:13.5px;line-height:18px;color:#000;">xịn</div><div class="t" style="letter-spacing:0.071px;left:574.80px;top:494.80px;font-size:13.5px;line-height:18px;color:#000;">1/12/2016</div><div class="t" style="left:650.80px;top:494.80px;font-size:13.5px;line-height:18px;color:#000;">1</div><div class="t" style="transform:scaleX(0.9540);transform-origin:0 50%;left:688.80px;top:494.80px;font-size:13.5px;line-height:18px;color:#000;">1,100,000.00</div><div class="t" style="left:767.50px;top:494.80px;font-size:13.5px;line-height:18px;color:#000;text-decoration:underline;">đ</div><div class="t" style="letter-spacing:-0.158px;left:801.80px;top:494.80px;font-size:13.5px;line-height:18px;color:#000;">12</div>
<!-- part_bottom -->
<div class="a" style="left:201px;top:687px;width:1165px;height:20px;background:linear-gradient(to bottom,#f3f4f6 0,#f3f4f6 9.500px,#e6e8ec 9.500px,#e6e8ec 100%);border-top:1px solid #b3b8c0;border-bottom:1px solid #9da3ad"></div><div class="t" style="letter-spacing:-0.074px;left:206.40px;top:689.80px;font-size:11px;line-height:14px;color:#6b6363;">Record:</div><svg style="left:251.5px;top:692.5px" width="7" height="8" viewBox="0 0 7 8"><path d="M.6 0v8" stroke="#3c3c3c" stroke-width="1.300"/><path d="M6.500 0v8l-4.500-4z" fill="#3c3c3c"/></svg><svg style="left:270px;top:692.5px" width="5" height="8" viewBox="0 0 5 8"><path d="M4.500 0v8l-4.500-4z" fill="#b4b4b4"/></svg><div class="a" style="left:280.500px;top:689px;width:49.500px;height:15.500px;background:#fff;border:1px solid #d9dce1"></div><div class="t" style="letter-spacing:0.496px;left:281.50px;top:689.80px;font-size:11px;line-height:14px;color:#2a1f1f;">1 of 7</div><svg style="left:339px;top:692.5px" width="5" height="8" viewBox="0 0 5 8"><path d="M0 0v8l4.500-4z" fill="#3c3c3c"/></svg><svg style="left:355px;top:692.5px" width="7" height="8" viewBox="0 0 7 8"><path d="M0 0v8l4.500-4z" fill="#3c3c3c"/><path d="M5.900 0v8" stroke="#3c3c3c" stroke-width="1.300"/></svg><svg style="left:369px;top:692px" width="12" height="9" viewBox="0 0 12 9"><path d="M0 .5v8l4.500-4z" fill="#3c3c3c"/><path d="M8.500 0v9M4.500 4.500h8M5.700 1.600l5.600 5.800M11.300 1.600l-5.600 5.800" stroke="#f0b323" stroke-width="1.500"/></svg><div class="a" style="left:387px;top:688px;width:1px;height:17.500px;background:#b4b9c2"></div><svg style="left:396.5px;top:690.5px" width="14" height="12" viewBox="0 0 14 12"><path d="M.5 .5h10l-3.800 4.300v5.500l-2.400 1v-6.500z" fill="#e3e3e3" stroke="#a5a5a5" stroke-width=".9"/><path d="M7 5l5.500 6M12.500 5l-5.500 6" stroke="#9b9b9b" stroke-width="1.400"/></svg><div class="t" style="letter-spacing:0.248px;left:414.20px;top:689.80px;font-size:11px;line-height:14px;color:#8c8c8c;">No Filter</div><div class="a" style="left:467px;top:688px;width:1px;height:17.500px;background:#b4b9c2"></div><div class="a" style="left:473px;top:689px;width:70px;height:15.500px;background:#fff;border:1px solid #d9dce1"></div><div class="t" style="letter-spacing:-0.192px;left:475.80px;top:689.80px;font-size:11px;line-height:14px;color:#2a1f1f;">Search</div><div class="a" style="left:0;top:707px;width:1366px;height:21px;background:linear-gradient(to bottom,#eaecf0 0,#dcdfe4 40%,#c2c6cd 100%)"></div><div class="t" style="letter-spacing:0.204px;left:7.80px;top:710.30px;font-size:11px;line-height:14px;color:#2e2a2a;">Form View</div><div class="a" style="left:1249px;top:708px;width:1px;height:19px;background:#8f949d"></div><div class="a" style="left:1250px;top:708px;width:1px;height:19px;background:#eef0f3"></div><div class="a" style="left:681px;top:708px;width:1px;height:19px;background:#8f949d"></div><div class="a" style="left:682px;top:708px;width:1px;height:19px;background:#eef0f3"></div><div class="a" style="left:1254.500px;top:708px;width:18.500px;height:18.500px;border:1px solid #e8b13c;border-radius:2px;background:linear-gradient(to bottom,#fde9a3,#fbd05d)"></div><svg style="left:1257.8px;top:711.5px" width="12" height="11" viewBox="0 0 12 11"><rect x=".5" y=".5" width="11" height="10" fill="#fff" stroke="#5b5f66"/><rect x="1" y="1" width="10" height="2" fill="#5b5f66"/><path d="M2.500 5.500h2.500M2.500 8h2.500" stroke="#5b5f66"/><rect x="6" y="4.500" width="4" height="1.800" fill="none" stroke="#5b5f66" stroke-width=".7"/><rect x="6" y="7.300" width="4" height="1.800" fill="none" stroke="#5b5f66" stroke-width=".7"/></svg><svg style="left:1275.5px;top:711.5px" width="12" height="11" viewBox="0 0 12 11"><rect x=".5" y=".5" width="11" height="10" fill="#fff" stroke="#5b5f66"/><rect x="1" y="1" width="10" height="2" fill="#5b5f66"/><path d="M.5 5.500h11M.5 8h11M4 3v7.500M8 3v7.500" stroke="#5b5f66" stroke-width=".8"/></svg><svg style="left:1294.5px;top:711.5px" width="12" height="11" viewBox="0 0 12 11"><rect x=".5" y="2.500" width="9" height="8" fill="#fff" stroke="#5b5f66"/><path d="M.5 5.500h9M.5 8h9M3.500 2.500v8M6.500 2.500v8" stroke="#5b5f66" stroke-width=".8"/><path d="M8 0l3.500 3.500M11.500 0l-3.500 3.500" stroke="#5b5f66" stroke-width="1.200"/></svg><svg style="left:1312px;top:711.5px" width="12" height="11" viewBox="0 0 12 11"><path d="M.5 10.500h11M2.500 10v-5h2.500v5M6 10v-8.500h2.500v8.500M9.500 10v-4h2v4" fill="#fff" stroke="#5b5f66" stroke-width=".9"/></svg><svg style="left:1329.5px;top:711.5px" width="12" height="11" viewBox="0 0 12 11"><rect x="1.500" y=".5" width="9" height="10" fill="#fff" stroke="#5b5f66"/><path d="M3.500 3h5M3.500 5.500h5M3.500 8h5" stroke="#5b5f66" stroke-width=".9"/><path d="M0 2.500h2M0 8.500h2M10 2.500h2M10 8.500h2" stroke="#5b5f66"/></svg><svg style="left:1348.5px;top:711.5px" width="12" height="11" viewBox="0 0 12 11"><path d="M.5 10.500h11M.5 10.500v-4l4 2.500z" fill="#5b5f66" stroke="#5b5f66" stroke-width=".8"/><path d="M3 8.500l8-7.500" stroke="#5b5f66" stroke-width="1.800"/><path d="M7 1l4 0l0 4" fill="none" stroke="#5b5f66" stroke-width="1"/></svg>
<!-- part_task -->
<div class="a" style="left:0;top:728px;width:1366px;height:40px;background:linear-gradient(to bottom,#17181a 0,#17181a 1px,#9c9ea1 1px,#9c9ea1 1.800px,#2d2f33 2.200px,#25272b 40%,#1e2023 100%)"></div><div class="a" style="left:0;top:730px;width:1366px;height:38px;overflow:hidden"><div class="a" style="left:262px;top:-10px;width:24px;height:60px;background:rgba(110,76,60,.4);filter:blur(7px);transform:skewX(-30deg)"></div><div class="a" style="left:310px;top:-10px;width:20px;height:60px;background:rgba(90,62,52,.35);filter:blur(7px);transform:skewX(-30deg)"></div><div class="a" style="left:700px;top:-10px;width:30px;height:60px;background:rgba(80,55,52,.35);filter:blur(8px);transform:skewX(-35deg)"></div><div class="a" style="left:775px;top:-10px;width:40px;height:60px;background:rgba(110,62,58,.45);filter:blur(8px);transform:skewX(-35deg)"></div><div class="a" style="left:845px;top:-10px;width:30px;height:60px;background:rgba(80,56,52,.3);filter:blur(8px);transform:skewX(-35deg)"></div><div class="a" style="left:1085px;top:8px;width:60px;height:40px;background:rgba(105,75,62,.5);filter:blur(12px);transform:skewX(0deg)"></div><div class="a" style="left:1150px;top:10px;width:150px;height:40px;background:rgba(85,62,52,.4);filter:blur(14px);transform:skewX(0deg)"></div><div class="a" style="left:1290px;top:10px;width:60px;height:40px;background:rgba(70,52,46,.35);filter:blur(10px);transform:skewX(0deg)"></div></div><svg style="left:8.2px;top:729.8px" width="38" height="37.5" viewBox="0 0 38 37.5"><defs><radialGradient id="og" cx=".5" cy=".98" r=".62"><stop offset="0" stop-color="#12d6fb"/><stop offset=".45" stop-color="#0b86c9"/><stop offset="1" stop-color="#0a4a8c"/></radialGradient><linearGradient id="oh" x1="0" y1="0" x2="0" y2="1"><stop offset="0" stop-color="#dfe8f0" stop-opacity=".95"/><stop offset="1" stop-color="#7fa0c2" stop-opacity=".8"/></linearGradient><linearGradient id="f1" x1="0" y1="0" x2="0" y2="1"><stop offset="0" stop-color="#e5461f"/><stop offset="1" stop-color="#f59a1e"/></linearGradient><linearGradient id="f2" x1="0" y1="1" x2="1" y2="0"><stop offset="0" stop-color="#c5e07a"/><stop offset="1" stop-color="#4f9f2e"/></linearGradient><linearGradient id="f3" x1="0" y1="0" x2="1" y2="1"><stop offset="0" stop-color="#1d7fd6"/><stop offset=".6" stop-color="#7fc2f2"/><stop offset="1" stop-color="#1a72c2"/></linearGradient><linearGradient id="f4" x1="0" y1="0" x2="0" y2="1"><stop offset="0" stop-color="#fde27a"/><stop offset="1" stop-color="#f6a01c"/></linearGradient></defs><circle cx="18.900" cy="18.500" r="18.300" fill="url(#og)" stroke="#8d98a4" stroke-width=".9"/><circle cx="18.900" cy="18.500" r="17.300" fill="none" stroke="#0d3f7c" stroke-width="1.200" opacity=".7"/><path d="M2.200 17A16.800 16.800 0 0 1 35.600 17Q28 14.500 18.900 16.500T2.200 17Z" fill="url(#oh)"/><path d="M11.200 7.900q4.600-1.500 9.300.6l-1.900 8.200q-4.500-2-9-.8z" fill="url(#f1)"/><path d="M21.600 10.400q4.600 2 9.300.3l-1.900 8.200q-4.600 1.700-9.300-.6z" fill="url(#f2)"/><path d="M8.750 17.500q4.600-1.500 9.250.5l-2.100 8.200q-4.500-2-9.100-.5z" fill="url(#f3)"/><path d="M19.100 19.700q4.500 2.200 9.100.8l-2 7.900q-4.700 1.700-9.500-.5z" fill="url(#f4)"/></svg><svg style="left:57.8px;top:732.6px" width="9" height="31" viewBox="0 0 9 31"><rect x="0" y="0" width="1.800" height="1.800" fill="#050506"/><rect x="0.9" y="0.9" width="1.300" height="1.300" fill="#6e7175"/><rect x="3" y="0" width="1.800" height="1.800" fill="#050506"/><rect x="3.9" y="0.9" width="1.300" height="1.300" fill="#6e7175"/><rect x="6" y="0" width="1.800" height="1.800" fill="#050506"/><rect x="6.9" y="0.9" width="1.300" height="1.300" fill="#6e7175"/><rect x="0" y="3.94" width="1.800" height="1.800" fill="#050506"/><rect x="0.9" y="4.84" width="1.300" height="1.300" fill="#6e7175"/><rect x="3" y="3.94" width="1.800" height="1.800" fill="#050506"/><rect x="3.9" y="4.84" width="1.300" height="1.300" fill="#6e7175"/><rect x="6" y="3.94" width="1.800" height="1.800" fill="#050506"/><rect x="6.9" y="4.84" width="1.300" height="1.300" fill="#6e7175"/><rect x="0" y="7.88" width="1.800" height="1.800" fill="#050506"/><rect x="0.9" y="8.78" width="1.300" height="1.300" fill="#6e7175"/><rect x="3" y="7.88" width="1.800" height="1.800" fill="#050506"/><rect x="3.9" y="8.78" width="1.300" height="1.300" fill="#6e7175"/><rect x="6" y="7.88" width="1.800" height="1.800" fill="#050506"/><rect x="6.9" y="8.78" width="1.300" height="1.300" fill="#6e7175"/><rect x="0" y="11.82" width="1.800" height="1.800" fill="#050506"/><rect x="0.9" y="12.72" width="1.300" height="1.300" fill="#6e7175"/><rect x="3" y="11.82" width="1.800" height="1.800" fill="#050506"/><rect x="3.9" y="12.72" width="1.300" height="1.300" fill="#6e7175"/><rect x="6" y="11.82" width="1.800" height="1.800" fill="#050506"/><rect x="6.9" y="12.72" width="1.300" height="1.300" fill="#6e7175"/><rect x="0" y="15.76" width="1.800" height="1.800" fill="#050506"/><rect x="0.9" y="16.66" width="1.300" height="1.300" fill="#6e7175"/><rect x="3" y="15.76" width="1.800" height="1.800" fill="#050506"/><rect x="3.9" y="16.66" width="1.300" height="1.300" fill="#6e7175"/><rect x="6" y="15.76" width="1.800" height="1.800" fill="#050506"/><rect x="6.9" y="16.66" width="1.300" height="1.300" fill="#6e7175"/><rect x="0" y="19.7" width="1.800" height="1.800" fill="#050506"/><rect x="0.9" y="20.6" width="1.300" height="1.300" fill="#6e7175"/><rect x="3" y="19.7" width="1.800" height="1.800" fill="#050506"/><rect x="3.9" y="20.6" width="1.300" height="1.300" fill="#6e7175"/><rect x="6" y="19.7" width="1.800" height="1.800" fill="#050506"/><rect x="6.9" y="20.6" width="1.300" height="1.300" fill="#6e7175"/><rect x="0" y="23.64" width="1.800" height="1.800" fill="#050506"/><rect x="0.9" y="24.54" width="1.300" height="1.300" fill="#6e7175"/><rect x="3" y="23.64" width="1.800" height="1.800" fill="#050506"/><rect x="3.9" y="24.54" width="1.300" height="1.300" fill="#6e7175"/><rect x="6" y="23.64" width="1.800" height="1.800" fill="#050506"/><rect x="6.9" y="24.54" width="1.300" height="1.300" fill="#6e7175"/><rect x="0" y="27.58" width="1.800" height="1.800" fill="#050506"/><rect x="0.9" y="28.48" width="1.300" height="1.300" fill="#6e7175"/><rect x="3" y="27.58" width="1.800" height="1.800" fill="#050506"/><rect x="3.9" y="28.48" width="1.300" height="1.300" fill="#6e7175"/><rect x="6" y="27.58" width="1.800" height="1.800" fill="#050506"/><rect x="6.9" y="28.48" width="1.300" height="1.300" fill="#6e7175"/></svg><div class="a" style="left:76.3px;top:729px;width:61.7px;height:37.500px;border:1px solid #a3a4a6;border-radius:2px;background:linear-gradient(to bottom,#565759,#505153 50%,#4a4b4d);box-shadow:inset 0 0 0 1px rgba(255,255,255,.08)"></div><svg style="left:90.8px;top:734.3px" width="32.5" height="29.5" viewBox="0 0 32.5 29.5"><defs><linearGradient id="fo" x1="0" y1="0" x2="0" y2="1"><stop offset="0" stop-color="#fcf1c0"/><stop offset=".5" stop-color="#f9e48f"/><stop offset="1" stop-color="#f3d05c"/></linearGradient><linearGradient id="st" x1="0" y1="0" x2="0" y2="1"><stop offset="0" stop-color="#b9e6fa"/><stop offset=".5" stop-color="#6ec0ee"/><stop offset="1" stop-color="#2d8fd6"/></linearGradient></defs><path d="M1.300 6V1.500q0-1.500 1.500-1.500h12.600q1.500 0 1.500 1.500V6z" fill="#f2dc93" stroke="#d8b95a" stroke-width=".6"/><rect x="4.200" y="1.100" width="2.900" height="2" fill="#14c01e"/><rect x="7.100" y="1.100" width="6.200" height="2" fill="#fff"/><path d="M11.200 8V3.800q0-1.500 1.500-1.500h16.800q1.500 0 1.500 1.500V8z" fill="#f2dc93" stroke="#d8b95a" stroke-width=".6"/><rect x="12.200" y="3.200" width="2.900" height="1.900" fill="#d6301f"/><rect x="15.100" y="3.200" width="6" height="1.900" fill="#fff"/><path d="M0 27.300V5.500q0-1 1-1h16l1.500 1.500H31.300q1 0 1 1V27.300z" fill="#efd27a" stroke="#cfae4c" stroke-width=".6"/><path d="M18.500 10V6q0-1.500 1.500-1.500h10.500q1.500 0 1.500 1.500v4z" fill="#f5e3a2" stroke="#d8b95a" stroke-width=".6"/><rect x="20.200" y="5.300" width="2.900" height="1.900" fill="#1f8df0"/><rect x="23.100" y="5.300" width="5" height="1.900" fill="#fff"/><path d="M.6 27V8.300q0-1 1-1h15.400l1.500 1.700H30.800q1 0 1 1V27z" fill="url(#fo)" stroke="#fff" stroke-width=".7" stroke-opacity=".7"/><path d="M4.200 29.200V18.600q0-2.500 2.500-2.500h18.900q2.500 0 2.500 2.500V29.200h-6.800V22.900H11V29.200z" fill="url(#st)" stroke="#2c86c9" stroke-width=".7"/><path d="M5.200 28.500V18.800q0-1.700 1.700-1.700h18.500q1.700 0 1.700 1.700V28.500" fill="none" stroke="#e6f6fe" stroke-width=".7" opacity=".8"/><circle cx="7.800" cy="18.800" r="1.800" fill="#fff" opacity=".9"/><path d="M7.800 11.500v7.300M7.800 18.800l5-5" stroke="#fff" stroke-width=".5" opacity=".8"/></svg><svg style="left:157.2px;top:732.2px" width="29" height="29" viewBox="0 0 29 29"><defs><linearGradient id="xg" x1="0" y1="0" x2="1" y2="1"><stop offset="0" stop-color="#e3f2e1"/><stop offset=".5" stop-color="#a9d7a6"/><stop offset="1" stop-color="#4ea854"/></linearGradient><linearGradient id="xl" x1="0" y1="0" x2="1" y2="1"><stop offset="0" stop-color="#a4d13a"/><stop offset="1" stop-color="#4f9a20"/></linearGradient></defs><path d="M.8 28.200V7q0-6.200 6.200-6.200h21.200v27.400z" fill="url(#xg)" stroke="#1f7a30" stroke-width="1.500"/><path d="M2.300 26.700V7.200q0-4.700 4.700-4.700h19.700v24.200z" fill="none" stroke="#fff" stroke-width=".8" opacity=".8"/><path d="M14.500 5h5l-11 17.500h-5z" fill="#1f6b3a"/><path d="M5 5h5.200l9.500 17.500h-5.200z" fill="url(#xl)"/><path d="M15 12l14.500 4.500l-2.500 10.500l-23.500-1.500l1.500-3.500l8-1.500z" fill="#fff"/><path d="M16 15.500l11.500 3.500M14.500 18.500l12 3M8 22.500l18.500 2.500M6 24.500l8 1" stroke="#7cc080" stroke-width="1.400"/><path d="M20.500 14.500l-3 11M24.500 16l-2.500 10.500" stroke="#fff" stroke-width="1.200"/></svg><svg style="left:223.4px;top:732.2px" width="29" height="29" viewBox="0 0 29 29"><defs><linearGradient id="wg" x1="0" y1="0" x2="1" y2="1"><stop offset="0" stop-color="#f0f5fd"/><stop offset=".5" stop-color="#b5ccf2"/><stop offset="1" stop-color="#3f78d3"/></linearGradient></defs><path d="M.8 28.200V7q0-6.200 6.200-6.200h21.200v27.400z" fill="url(#wg)" stroke="#1f4fa8" stroke-width="1.500"/><path d="M2.300 26.700V7.200q0-4.700 4.700-4.700h19.700v24.200z" fill="none" stroke="#fff" stroke-width=".8" opacity=".8"/><text x="13.800" y="20.500" font-family="Liberation Sans,sans-serif" font-weight="bold" font-size="20.500" text-anchor="middle" fill="#1450bd" stroke="#1450bd" stroke-width=".7" textLength="21" lengthAdjust="spacingAndGlyphs">W</text><path d="M21.500 14.500l8 2.500l-2.500 10.200l-24-1l1.500-4.500l15-2z" fill="#fff"/><path d="M8 23l17 2M12 20.800l14 2M22 17.500l5 1.500" stroke="#b9ccee" stroke-width="1.300"/></svg><svg style="left:288.5px;top:732.5px" width="33" height="30" viewBox="0 0 33 30"><defs><linearGradient id="rg" x1="0" y1="0" x2="0" y2="1"><stop offset="0" stop-color="#ffe600"/><stop offset=".17" stop-color="#f6c40a"/><stop offset=".24" stop-color="#e01208"/><stop offset="1" stop-color="#d40a05"/></linearGradient></defs><path d="M2.500 15.300Q17 30.500 30.700 15.300" fill="none" stroke="#f26a1a" stroke-width="3.600"/><path d="M2.500 14.300Q17 28.500 30.700 14.300" fill="none" stroke="#dc0c06" stroke-width="3.600"/><path d="M17.300 .5L31.300 28.800H25.900L17.300 8.200L7.100 28.800H1.900Z" fill="url(#rg)"/><path d="M17.300 .5L1.900 28.800h1.300L17.300 3z" fill="#7c0704" opacity=".55"/><circle cx="3.100" cy="15.300" r="2.600" fill="#fff"/><circle cx="3.100" cy="15.300" r="1.300" fill="#fbab12"/><circle cx="30.100" cy="15.300" r="2.600" fill="#fff"/><circle cx="30.100" cy="15.300" r="1.300" fill="#fbab12"/></svg><svg style="left:354.9px;top:732px" width="32.2" height="32.2" viewBox="0 0 32.2 32.2"><defs><linearGradient id="tg2" x1="0" y1="0" x2="1" y2="1"><stop offset="0" stop-color="#1aa197"/><stop offset=".6" stop-color="#2bbdb3"/><stop offset="1" stop-color="#16968c"/></linearGradient></defs><rect x="1" y="1" width="30.200" height="30.200" fill="url(#tg2)" stroke="#fff" stroke-width="2"/><path d="M3 29.500l6.500-24h5l-6 24z" fill="#d9f3f0"/><path d="M9.500 5.500h5l5 14v10h-3.500z" fill="#0f7f78"/><path d="M9.500 5.500l3-2h4.500l-2.500 2z" fill="#0c6a64"/><path d="M6 22h11v3h-12z" fill="#c9eeea"/><path d="M22.800 2v28.500M2 21.600h28.500" stroke="#fff" stroke-width="1.600"/><rect x="20" y="18.600" width="6" height="6" fill="#22b3a9" stroke="#fff" stroke-width="1.500"/><rect x="22.300" y="20.900" width="1.400" height="1.400" fill="#d9f3f0"/></svg><svg style="left:421.6px;top:732.3px" width="30.8" height="31.2" viewBox="0 0 30.8 31.2"><rect x=".4" y=".4" width="30" height="30.400" rx="3.500" fill="#17140f" stroke="#0a0906" stroke-width=".8"/><path d="M1.600 1.900h20.700v4.800h-15v7.900h-5.700z" fill="#efe36a"/><path d="M1.600 1.900h20.700v2h-18.700v10.700h-2z" fill="#f8f3b4"/><path d="M23.500 1.900h5.800v19.800h-5.800v-7.100h-7.100v-5.300h7.100z" fill="#119a52"/><path d="M8.300 9.300h6.200v12.400h-7.600v8.100h-5.300v-13.300h6.700z" fill="#1878c8"/><path d="M16.400 16.500h6.100v7.100h6.800v6.200h-21v-6.200h8.100z" fill="#c4402c"/></svg><div class="a" style="left:471.8px;top:729px;width:62.6px;height:37.500px;border:1px solid #a3a4a6;border-radius:2px;background:linear-gradient(to bottom,#565759,#505153 50%,#4a4b4d);box-shadow:inset 0 0 0 1px rgba(255,255,255,.08)"></div><svg style="left:486.8px;top:729.5px" width="33" height="34" viewBox="0 0 33 34"><path d="M14.260 3.800A14.300 14.300 0 1 0 29.600 13.580L22.280 15.960A6.600 6.600 0 1 1 15.200 11.450Z" fill="#fff" stroke="#fff" stroke-width="2.400" stroke-linejoin="round"/><path d="M16.800 9.300L17.600 3.900L20.300 3.200L19.300 9.600Z" fill="#fff" stroke="#fff" stroke-width="2.200" stroke-linejoin="round"/><path d="M21.800 11.300L24.300 4.300L31.600 2.500L25.800 13Z" fill="#fff" stroke="#fff" stroke-width="2.200" stroke-linejoin="round"/><path d="M22.800 14.600L27.800 10.800L29.600 13L24.300 16.600Z" fill="#fff" stroke="#fff" stroke-width="2.200" stroke-linejoin="round"/><path d="M14.260 3.800A14.300 14.300 0 1 0 29.600 13.580L22.280 15.960A6.600 6.600 0 1 1 15.200 11.450Z" fill="#54ad44"/><circle cx="16" cy="18" r="6.600" fill="#fff"/><circle cx="16" cy="18" r="4.700" fill="#54ad44"/><path d="M16.800 9.300L17.600 3.900L20.300 3.200L19.300 9.600Z" fill="#f58220"/><path d="M21.800 11.300L24.300 4.300L31.600 2.500L25.800 13Z" fill="#54ad44"/><path d="M22.800 14.600L27.800 10.800L29.600 13L24.300 16.600Z" fill="#f58220"/></svg><div class="a" style="left:537.800px;top:729px;width:57.600px;height:37.500px;border:1px solid #e4e4e4;border-radius:2px;background:linear-gradient(to bottom,#77787a,#8b8c8e 60%,#7f8082);box-shadow:inset 0 0 0 1px rgba(255,255,255,.15)"></div><div class="a" style="left:596px;top:729px;width:4.400px;height:37.500px;border:1px solid #e4e4e4;border-radius:2px;background:#838486"></div><svg style="left:549.9px;top:732.1px" width="29.5" height="29" viewBox="0 0 29.5 29"><defs><linearGradient id="ag" x1="0" y1="0" x2="1" y2="1"><stop offset="0" stop-color="#fdeaf2"/><stop offset=".5" stop-color="#f3a9c8"/><stop offset="1" stop-color="#de4f97"/></linearGradient></defs><path d="M.8 28.200V7q0-6.200 6.200-6.200h21.200v27.400z" fill="url(#ag)" stroke="#a8135a" stroke-width="1.500"/><path d="M2.300 26.700V7.200q0-4.700 4.700-4.700h19.700v24.200z" fill="none" stroke="#fff" stroke-width=".8" opacity=".7"/><path d="M7.200 3.800h5.800l6.500 18.500h-4.800l-1.300-4.200h-6.600l-1.300 4.200h-4.300z" fill="#a5104f"/><path d="M8 14.500h4.300l-2.100-7z" fill="#f3a9c8"/><ellipse cx="23" cy="16" rx="6.800" ry="5.800" fill="#fff"/><path d="M18 18l-11 7.500l2.500 1l3-.8l1-1.800l2.500-.5l4-2.500z" fill="#fff"/><circle cx="25" cy="13" r="1.600" fill="#d64b90"/></svg><svg style="left:1116px;top:732.6px" width="9" height="31" viewBox="0 0 9 31"><rect x="0" y="0" width="1.800" height="1.800" fill="#050506"/><rect x="0.9" y="0.9" width="1.300" height="1.300" fill="#6e7175"/><rect x="3" y="0" width="1.800" height="1.800" fill="#050506"/><rect x="3.9" y="0.9" width="1.300" height="1.300" fill="#6e7175"/><rect x="6" y="0" width="1.800" height="1.800" fill="#050506"/><rect x="6.9" y="0.9" width="1.300" height="1.300" fill="#6e7175"/><rect x="0" y="3.94" width="1.800" height="1.800" fill="#050506"/><rect x="0.9" y="4.84" width="1.300" height="1.300" fill="#6e7175"/><rect x="3" y="3.94" width="1.800" height="1.800" fill="#050506"/><rect x="3.9" y="4.84" width="1.300" height="1.300" fill="#6e7175"/><rect x="6" y="3.94" width="1.800" height="1.800" fill="#050506"/><rect x="6.9" y="4.84" width="1.300" height="1.300" fill="#6e7175"/><rect x="0" y="7.88" width="1.800" height="1.800" fill="#050506"/><rect x="0.9" y="8.78" width="1.300" height="1.300" fill="#6e7175"/><rect x="3" y="7.88" width="1.800" height="1.800" fill="#050506"/><rect x="3.9" y="8.78" width="1.300" height="1.300" fill="#6e7175"/><rect x="6" y="7.88" width="1.800" height="1.800" fill="#050506"/><rect x="6.9" y="8.78" width="1.300" height="1.300" fill="#6e7175"/><rect x="0" y="11.82" width="1.800" height="1.800" fill="#050506"/><rect x="0.9" y="12.72" width="1.300" height="1.300" fill="#6e7175"/><rect x="3" y="11.82" width="1.800" height="1.800" fill="#050506"/><rect x="3.9" y="12.72" width="1.300" height="1.300" fill="#6e7175"/><rect x="6" y="11.82" width="1.800" height="1.800" fill="#050506"/><rect x="6.9" y="12.72" width="1.300" height="1.300" fill="#6e7175"/><rect x="0" y="15.76" width="1.800" height="1.800" fill="#050506"/><rect x="0.9" y="16.66" width="1.300" height="1.300" fill="#6e7175"/><rect x="3" y="15.76" width="1.800" height="1.800" fill="#050506"/><rect x="3.9" y="16.66" width="1.300" height="1.300" fill="#6e7175"/><rect x="6" y="15.76" width="1.800" height="1.800" fill="#050506"/><rect x="6.9" y="16.66" width="1.300" height="1.300" fill="#6e7175"/><rect x="0" y="19.7" width="1.800" height="1.800" fill="#050506"/><rect x="0.9" y="20.6" width="1.300" height="1.300" fill="#6e7175"/><rect x="3" y="19.7" width="1.800" height="1.800" fill="#050506"/><rect x="3.9" y="20.6" width="1.300" height="1.300" fill="#6e7175"/><rect x="6" y="19.7" width="1.800" height="1.800" fill="#050506"/><rect x="6.9" y="20.6" width="1.300" height="1.300" fill="#6e7175"/><rect x="0" y="23.64" width="1.800" height="1.800" fill="#050506"/><rect x="0.9" y="24.54" width="1.300" height="1.300" fill="#6e7175"/><rect x="3" y="23.64" width="1.800" height="1.800" fill="#050506"/><rect x="3.9" y="24.54" width="1.300" height="1.300" fill="#6e7175"/><rect x="6" y="23.64" width="1.800" height="1.800" fill="#050506"/><rect x="6.9" y="24.54" width="1.300" height="1.300" fill="#6e7175"/><rect x="0" y="27.58" width="1.800" height="1.800" fill="#050506"/><rect x="0.9" y="28.48" width="1.300" height="1.300" fill="#6e7175"/><rect x="3" y="27.58" width="1.800" height="1.800" fill="#050506"/><rect x="3.9" y="28.48" width="1.300" height="1.300" fill="#6e7175"/><rect x="6" y="27.58" width="1.800" height="1.800" fill="#050506"/><rect x="6.9" y="28.48" width="1.300" height="1.300" fill="#6e7175"/></svg><div class="t" style="transform:scaleX(0.8698);transform-origin:0 50%;left:1133.50px;top:739.50px;font-size:12px;line-height:14px;color:#e8e8e8;">EN</div><svg style="left:1164.5px;top:745.8px" width="8" height="4.5" viewBox="0 0 8 4.5"><path d="M0 4.500h8l-4-4.500z" fill="#f0f0f0"/></svg><svg style="left:1185.5px;top:742.5px" width="14" height="14" viewBox="0 0 14 14"><path d="M0 4.500h3l4-4v13l-4-4h-3z" fill="#f2f2f2"/><path d="M9 4.500q2 2.500 0 5M11 2.500q3.500 4.500 0 9" fill="none" stroke="#f2f2f2" stroke-width="1.200"/></svg><svg style="left:1208.7px;top:741px" width="16" height="16" viewBox="0 0 16 16"><rect x=".5" y=".5" width="15" height="15" fill="#f5dada" stroke="#e9a5a5"/><path d="M2.500 2.500h3l3 8l3.500-8h2l-4.500 11h-2.500z" fill="#d3201f"/></svg><svg style="left:1236.3px;top:742px" width="10" height="14" viewBox="0 0 10 14"><rect x="3" y="0" width="4" height="2" fill="#fff"/><rect x=".8" y="1.800" width="8.400" height="11.500" rx="1.500" fill="none" stroke="#fff" stroke-width="1.500"/><rect x="2.500" y="6" width="5" height="6" fill="#fff"/></svg><svg style="left:1257.7px;top:743.5px" width="15" height="11" viewBox="0 0 15 11"><rect x="0" y="9" width="2.200" height="2" fill="#f4f4f4"/><rect x="3" y="7" width="2.200" height="4" fill="#f4f4f4"/><rect x="6" y="4.5" width="2.200" height="6.5" fill="#f4f4f4"/><rect x="9" y="2" width="2.200" height="9" fill="#f4f4f4"/><rect x="12" y="0" width="2.200" height="11" fill="#f4f4f4"/></svg><div class="t" style="letter-spacing:-0.250px;left:1290.80px;top:734.00px;font-size:12px;line-height:14px;color:#fff;">10:27 AM</div><div class="t" style="letter-spacing:-0.217px;left:1287.00px;top:750.50px;font-size:12px;line-height:14px;color:#fff;">11/12/2016</div><div class="a" style="left:1352px;top:729.500px;width:13.500px;height:38.500px;border:1px solid #6c6f73;border-bottom:none;background:linear-gradient(to right,#2a2c30,#35373b 50%,#2a2c30);box-shadow:inset 0 0 0 1px #15171a"></div>
</body></html>
